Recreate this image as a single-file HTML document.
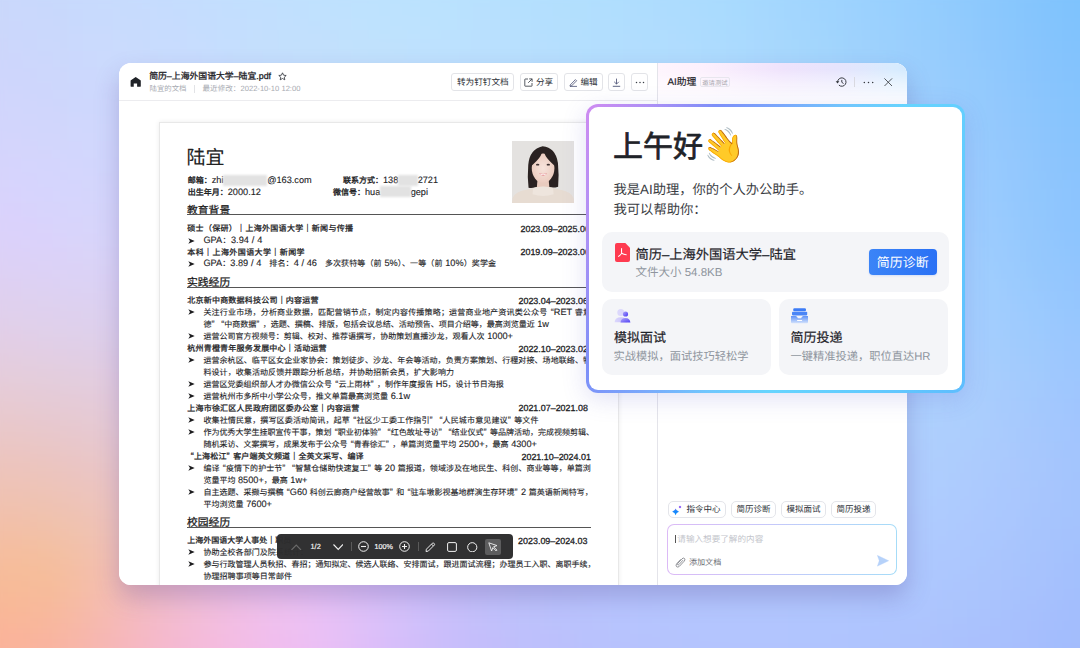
<!DOCTYPE html>
<html lang="zh-CN"><head><meta charset="utf-8">
<style>
@font-face{font-family:"LB";src:local("Liberation Sans");size-adjust:115%}
@font-face{font-family:"LB";src:local("Liberation Sans Bold");font-weight:bold;size-adjust:115%}
.doc .t{font-family:"LB","Liberation Sans",sans-serif;-webkit-text-stroke:0.12px #1d1d1f}
*{box-sizing:border-box;margin:0;padding:0}
html,body{width:1080px;height:648px;overflow:hidden;font-family:"Liberation Sans",sans-serif;color:#1f2329;text-rendering:geometricPrecision}
body{position:relative;background:#b8d0fe}
.bg{position:absolute;left:0;top:0}
.abs{position:absolute}
#win{position:absolute;left:119px;top:63px;width:788px;height:521.5px;border-radius:12px;background:#fff;overflow:hidden;box-shadow:0 12px 24px rgba(80,60,140,.27)}
#hdr{position:absolute;left:0;top:0;width:538px;height:38px;border-bottom:1px solid #ececef;background:#fff}
#docarea{position:absolute;left:0;top:38px;width:538px;bottom:0;background:#fff;overflow:hidden}
#page{position:absolute;left:40px;top:20.5px;width:459.5px;height:600px;background:#fff;box-shadow:0 0 5px rgba(0,0,0,.08);border:1px solid #e8e8e8}
.t b{font-weight:normal;-webkit-text-stroke:0.35px #1d1d1f}.t i.ql{font-style:normal;padding-left:.42em}.t i.qr{font-style:normal;padding-right:.42em}.t i.blur{display:inline-block;height:0;position:relative}.t i.blur::after{content:"";position:absolute;left:0;right:0;top:-8.5px;height:11px;background:#e2e2e2;filter:blur(1.3px)}
#ai{position:absolute;left:538px;top:0;width:250px;height:100%;border-left:1px solid #e4e4ea;background:#fff}
#pop{position:absolute;left:586px;top:104px;width:379px;height:289px;border-radius:12px;padding:3px;background:linear-gradient(116deg,#cf8bf1 0%,#ae90f5 12%,#7d8ff8 25%,#7aa8fb 38%,#70c6fd 50%,#66d4fe 62%,#62cbfe 80%,#5ebdfe 100%);box-shadow:0 6px 24px rgba(90,90,200,.18)}
#popin{width:100%;height:100%;border-radius:9px;background:#fff;position:relative}
#tb{position:absolute;left:277px;top:534px;width:235.5px;height:24.5px;border-radius:4px;background:rgba(44,44,45,.975)}

.pc{position:absolute;left:-119px;top:-63px;width:1080px;height:648px}
.t{position:absolute;white-space:nowrap;line-height:1}
.btn{position:absolute;height:18px;top:73px;border:1px solid #e3e4e8;border-radius:3px;background:#fff}
.btxt{position:absolute;top:4px;font-size:8.6px;color:#2b2f36;line-height:1;white-space:nowrap}

#ai::before{content:"";position:absolute;left:0;top:0;right:0;height:60px;background:linear-gradient(90deg,#fef4fd 0%,#fcf0fd 18%,#efe3fc 50%,#e6e4fd 72%,#d8ebfe 94%,#d4eafe 100%);-webkit-mask-image:linear-gradient(180deg,#000 0,#000 6px,rgba(0,0,0,.55) 20px,rgba(0,0,0,.1) 36px,transparent 52px)}

.card{position:absolute;background:#f4f5f8;border-radius:10px}

.chip{position:absolute;top:501.2px;height:17px;border:1px solid #e4e5ea;border-radius:5px;background:#fff}
.ctxt{position:absolute;top:505.3px;font-size:8.5px;color:#2b2f36;line-height:1;white-space:nowrap}
</style></head><body>
<svg class="bg" width="1080" height="648" viewBox="0 0 1080 648"><defs><filter id="bl" x="-10%" y="-10%" width="120%" height="120%"><feGaussianBlur stdDeviation="14"/></filter></defs><g filter="url(#bl)"><rect x="-30" y="-30" width="30" height="30" fill="#c9d7fb"/><rect x="0" y="-30" width="30" height="30" fill="#c9d8fc"/><rect x="30" y="-30" width="30" height="30" fill="#c8d9fc"/><rect x="60" y="-30" width="30" height="30" fill="#c7dafd"/><rect x="90" y="-30" width="30" height="30" fill="#c7dbfd"/><rect x="120" y="-30" width="30" height="30" fill="#c6dcfe"/><rect x="150" y="-30" width="30" height="30" fill="#c5ddfe"/><rect x="180" y="-30" width="30" height="30" fill="#c4defe"/><rect x="210" y="-30" width="30" height="30" fill="#c2dffe"/><rect x="240" y="-30" width="30" height="30" fill="#c1e0fe"/><rect x="270" y="-30" width="30" height="30" fill="#c0e0fe"/><rect x="300" y="-30" width="30" height="30" fill="#bfe1fe"/><rect x="330" y="-30" width="30" height="30" fill="#bee1fe"/><rect x="360" y="-30" width="30" height="30" fill="#bde2fe"/><rect x="390" y="-30" width="30" height="30" fill="#bbe2fe"/><rect x="420" y="-30" width="30" height="30" fill="#b9e2fe"/><rect x="450" y="-30" width="30" height="30" fill="#b8e1fe"/><rect x="480" y="-30" width="30" height="30" fill="#b6e1fe"/><rect x="510" y="-30" width="30" height="30" fill="#b4e0fe"/><rect x="540" y="-30" width="30" height="30" fill="#b2dffe"/><rect x="570" y="-30" width="30" height="30" fill="#b1dffe"/><rect x="600" y="-30" width="30" height="30" fill="#afdefe"/><rect x="630" y="-30" width="30" height="30" fill="#aeddfe"/><rect x="660" y="-30" width="30" height="30" fill="#acdcfe"/><rect x="690" y="-30" width="30" height="30" fill="#aadbfe"/><rect x="720" y="-30" width="30" height="30" fill="#a7dafe"/><rect x="750" y="-30" width="30" height="30" fill="#a4d8fe"/><rect x="780" y="-30" width="30" height="30" fill="#a2d6fe"/><rect x="810" y="-30" width="30" height="30" fill="#9fd4fe"/><rect x="840" y="-30" width="30" height="30" fill="#9bd2fe"/><rect x="870" y="-30" width="30" height="30" fill="#98d0fe"/><rect x="900" y="-30" width="30" height="30" fill="#95cefe"/><rect x="930" y="-30" width="30" height="30" fill="#91cbfe"/><rect x="960" y="-30" width="30" height="30" fill="#8dc9fd"/><rect x="990" y="-30" width="30" height="30" fill="#88c7fd"/><rect x="1020" y="-30" width="30" height="30" fill="#83c5fd"/><rect x="1050" y="-30" width="30" height="30" fill="#7fc3fd"/><rect x="1080" y="-30" width="30" height="30" fill="#7dc2fe"/><rect x="1110" y="-30" width="30" height="30" fill="#7dc2fe"/><rect x="-30" y="0" width="30" height="30" fill="#cad7fb"/><rect x="0" y="0" width="30" height="30" fill="#cad8fc"/><rect x="30" y="0" width="30" height="30" fill="#c9d8fc"/><rect x="60" y="0" width="30" height="30" fill="#c8d9fd"/><rect x="90" y="0" width="30" height="30" fill="#c8dafd"/><rect x="120" y="0" width="30" height="30" fill="#c7dbfd"/><rect x="150" y="0" width="30" height="30" fill="#c6dcfe"/><rect x="180" y="0" width="30" height="30" fill="#c5ddfe"/><rect x="210" y="0" width="30" height="30" fill="#c3defe"/><rect x="240" y="0" width="30" height="30" fill="#c2dffe"/><rect x="270" y="0" width="30" height="30" fill="#c1e0fe"/><rect x="300" y="0" width="30" height="30" fill="#c0e1fe"/><rect x="330" y="0" width="30" height="30" fill="#bfe1fe"/><rect x="360" y="0" width="30" height="30" fill="#bee2fe"/><rect x="390" y="0" width="30" height="30" fill="#bce2fe"/><rect x="420" y="0" width="30" height="30" fill="#bbe2fe"/><rect x="450" y="0" width="30" height="30" fill="#b9e1fe"/><rect x="480" y="0" width="30" height="30" fill="#b7e0fe"/><rect x="510" y="0" width="30" height="30" fill="#b5e0fe"/><rect x="540" y="0" width="30" height="30" fill="#b3dffd"/><rect x="570" y="0" width="30" height="30" fill="#b2dffd"/><rect x="600" y="0" width="30" height="30" fill="#b0defe"/><rect x="630" y="0" width="30" height="30" fill="#afddfe"/><rect x="660" y="0" width="30" height="30" fill="#addcfe"/><rect x="690" y="0" width="30" height="30" fill="#abdbfe"/><rect x="720" y="0" width="30" height="30" fill="#a8dafe"/><rect x="750" y="0" width="30" height="30" fill="#a6d8fe"/><rect x="780" y="0" width="30" height="30" fill="#a3d6fe"/><rect x="810" y="0" width="30" height="30" fill="#a0d4fe"/><rect x="840" y="0" width="30" height="30" fill="#9dd2fe"/><rect x="870" y="0" width="30" height="30" fill="#99d0fe"/><rect x="900" y="0" width="30" height="30" fill="#96cefe"/><rect x="930" y="0" width="30" height="30" fill="#92ccfd"/><rect x="960" y="0" width="30" height="30" fill="#8ec9fd"/><rect x="990" y="0" width="30" height="30" fill="#89c7fd"/><rect x="1020" y="0" width="30" height="30" fill="#85c5fd"/><rect x="1050" y="0" width="30" height="30" fill="#80c3fd"/><rect x="1080" y="0" width="30" height="30" fill="#7ec2fd"/><rect x="1110" y="0" width="30" height="30" fill="#7ec2fd"/><rect x="-30" y="30" width="30" height="30" fill="#cdd6fb"/><rect x="0" y="30" width="30" height="30" fill="#ccd7fc"/><rect x="30" y="30" width="30" height="30" fill="#cbd8fc"/><rect x="60" y="30" width="30" height="30" fill="#cad9fd"/><rect x="90" y="30" width="30" height="30" fill="#cadafd"/><rect x="120" y="30" width="30" height="30" fill="#c9dbfd"/><rect x="150" y="30" width="30" height="30" fill="#c8dcfe"/><rect x="180" y="30" width="30" height="30" fill="#c7ddfe"/><rect x="210" y="30" width="30" height="30" fill="#c5defe"/><rect x="240" y="30" width="30" height="30" fill="#c4dffd"/><rect x="270" y="30" width="30" height="30" fill="#c3e0fd"/><rect x="300" y="30" width="30" height="30" fill="#c2e0fd"/><rect x="330" y="30" width="30" height="30" fill="#c1e1fd"/><rect x="360" y="30" width="30" height="30" fill="#c0e1fd"/><rect x="390" y="30" width="30" height="30" fill="#bfe1fd"/><rect x="420" y="30" width="30" height="30" fill="#bde1fe"/><rect x="450" y="30" width="30" height="30" fill="#bbe1fe"/><rect x="480" y="30" width="30" height="30" fill="#b9e0fe"/><rect x="510" y="30" width="30" height="30" fill="#b7e0fe"/><rect x="540" y="30" width="30" height="30" fill="#b6dffe"/><rect x="570" y="30" width="30" height="30" fill="#b4dffe"/><rect x="600" y="30" width="30" height="30" fill="#b3defe"/><rect x="630" y="30" width="30" height="30" fill="#b1ddfe"/><rect x="660" y="30" width="30" height="30" fill="#b0ddfe"/><rect x="690" y="30" width="30" height="30" fill="#addbfe"/><rect x="720" y="30" width="30" height="30" fill="#abdafe"/><rect x="750" y="30" width="30" height="30" fill="#a8d8fd"/><rect x="780" y="30" width="30" height="30" fill="#a5d7fd"/><rect x="810" y="30" width="30" height="30" fill="#a2d5fd"/><rect x="840" y="30" width="30" height="30" fill="#9fd2fd"/><rect x="870" y="30" width="30" height="30" fill="#9cd0fd"/><rect x="900" y="30" width="30" height="30" fill="#98cefd"/><rect x="930" y="30" width="30" height="30" fill="#95ccfd"/><rect x="960" y="30" width="30" height="30" fill="#91c9fd"/><rect x="990" y="30" width="30" height="30" fill="#8cc7fd"/><rect x="1020" y="30" width="30" height="30" fill="#87c5fd"/><rect x="1050" y="30" width="30" height="30" fill="#83c3fd"/><rect x="1080" y="30" width="30" height="30" fill="#80c2fd"/><rect x="1110" y="30" width="30" height="30" fill="#80c2fd"/><rect x="-30" y="60" width="30" height="30" fill="#cfd6fc"/><rect x="0" y="60" width="30" height="30" fill="#ced6fc"/><rect x="30" y="60" width="30" height="30" fill="#cdd7fc"/><rect x="60" y="60" width="30" height="30" fill="#ccd8fd"/><rect x="90" y="60" width="30" height="30" fill="#ccd9fd"/><rect x="120" y="60" width="30" height="30" fill="#cbdafd"/><rect x="150" y="60" width="30" height="30" fill="#cadbfd"/><rect x="180" y="60" width="30" height="30" fill="#c9dcfd"/><rect x="210" y="60" width="30" height="30" fill="#c7ddfd"/><rect x="240" y="60" width="30" height="30" fill="#c6defd"/><rect x="270" y="60" width="30" height="30" fill="#c5dffd"/><rect x="300" y="60" width="30" height="30" fill="#c4e0fd"/><rect x="330" y="60" width="30" height="30" fill="#c3e0fd"/><rect x="360" y="60" width="30" height="30" fill="#c2e1fd"/><rect x="390" y="60" width="30" height="30" fill="#c0e1fe"/><rect x="420" y="60" width="30" height="30" fill="#bfe1fe"/><rect x="450" y="60" width="30" height="30" fill="#bde0fe"/><rect x="480" y="60" width="30" height="30" fill="#bbe0fe"/><rect x="510" y="60" width="30" height="30" fill="#b9e0fe"/><rect x="540" y="60" width="30" height="30" fill="#b8dffe"/><rect x="570" y="60" width="30" height="30" fill="#b6dffe"/><rect x="600" y="60" width="30" height="30" fill="#b5defe"/><rect x="630" y="60" width="30" height="30" fill="#b3ddfe"/><rect x="660" y="60" width="30" height="30" fill="#b1dcfe"/><rect x="690" y="60" width="30" height="30" fill="#afdbfe"/><rect x="720" y="60" width="30" height="30" fill="#addafe"/><rect x="750" y="60" width="30" height="30" fill="#aad8fe"/><rect x="780" y="60" width="30" height="30" fill="#a7d7fe"/><rect x="810" y="60" width="30" height="30" fill="#a5d5fd"/><rect x="840" y="60" width="30" height="30" fill="#a2d3fd"/><rect x="870" y="60" width="30" height="30" fill="#9ed1fd"/><rect x="900" y="60" width="30" height="30" fill="#9bcefd"/><rect x="930" y="60" width="30" height="30" fill="#97ccfd"/><rect x="960" y="60" width="30" height="30" fill="#93cafd"/><rect x="990" y="60" width="30" height="30" fill="#8fc8fd"/><rect x="1020" y="60" width="30" height="30" fill="#8ac5fd"/><rect x="1050" y="60" width="30" height="30" fill="#85c3fd"/><rect x="1080" y="60" width="30" height="30" fill="#83c2fd"/><rect x="1110" y="60" width="30" height="30" fill="#83c2fd"/><rect x="-30" y="90" width="30" height="30" fill="#d1d5fc"/><rect x="0" y="90" width="30" height="30" fill="#d0d6fc"/><rect x="30" y="90" width="30" height="30" fill="#cfd6fc"/><rect x="60" y="90" width="30" height="30" fill="#ced7fd"/><rect x="90" y="90" width="30" height="30" fill="#ced8fd"/><rect x="120" y="90" width="30" height="30" fill="#cdd9fd"/><rect x="150" y="90" width="30" height="30" fill="#ccdafd"/><rect x="180" y="90" width="30" height="30" fill="#cbdbfd"/><rect x="210" y="90" width="30" height="30" fill="#cadcfd"/><rect x="240" y="90" width="30" height="30" fill="#c8ddfd"/><rect x="270" y="90" width="30" height="30" fill="#c7defd"/><rect x="300" y="90" width="30" height="30" fill="#c6dffd"/><rect x="330" y="90" width="30" height="30" fill="#c5e0fd"/><rect x="360" y="90" width="30" height="30" fill="#c4e0fe"/><rect x="390" y="90" width="30" height="30" fill="#c2e0fe"/><rect x="420" y="90" width="30" height="30" fill="#c1e0fe"/><rect x="450" y="90" width="30" height="30" fill="#bfe0fe"/><rect x="480" y="90" width="30" height="30" fill="#bde0fe"/><rect x="510" y="90" width="30" height="30" fill="#bbdffe"/><rect x="540" y="90" width="30" height="30" fill="#badffe"/><rect x="570" y="90" width="30" height="30" fill="#b8defe"/><rect x="600" y="90" width="30" height="30" fill="#b7defe"/><rect x="630" y="90" width="30" height="30" fill="#b5ddfe"/><rect x="660" y="90" width="30" height="30" fill="#b3dcfe"/><rect x="690" y="90" width="30" height="30" fill="#b1dbfe"/><rect x="720" y="90" width="30" height="30" fill="#afdafe"/><rect x="750" y="90" width="30" height="30" fill="#acd8fe"/><rect x="780" y="90" width="30" height="30" fill="#a9d7fe"/><rect x="810" y="90" width="30" height="30" fill="#a7d5fe"/><rect x="840" y="90" width="30" height="30" fill="#a4d3fe"/><rect x="870" y="90" width="30" height="30" fill="#a1d1fd"/><rect x="900" y="90" width="30" height="30" fill="#9dcffd"/><rect x="930" y="90" width="30" height="30" fill="#9accfd"/><rect x="960" y="90" width="30" height="30" fill="#95cafd"/><rect x="990" y="90" width="30" height="30" fill="#91c8fd"/><rect x="1020" y="90" width="30" height="30" fill="#8cc6fd"/><rect x="1050" y="90" width="30" height="30" fill="#87c4fd"/><rect x="1080" y="90" width="30" height="30" fill="#85c3fd"/><rect x="1110" y="90" width="30" height="30" fill="#85c3fd"/><rect x="-30" y="120" width="30" height="30" fill="#d3d4fc"/><rect x="0" y="120" width="30" height="30" fill="#d3d5fc"/><rect x="30" y="120" width="30" height="30" fill="#d2d6fc"/><rect x="60" y="120" width="30" height="30" fill="#d1d7fd"/><rect x="90" y="120" width="30" height="30" fill="#d0d8fd"/><rect x="120" y="120" width="30" height="30" fill="#cfd9fd"/><rect x="150" y="120" width="30" height="30" fill="#cedafd"/><rect x="180" y="120" width="30" height="30" fill="#cddbfd"/><rect x="210" y="120" width="30" height="30" fill="#ccdcfd"/><rect x="240" y="120" width="30" height="30" fill="#cadcfd"/><rect x="270" y="120" width="30" height="30" fill="#c9ddfd"/><rect x="300" y="120" width="30" height="30" fill="#c8defd"/><rect x="330" y="120" width="30" height="30" fill="#c7dffd"/><rect x="360" y="120" width="30" height="30" fill="#c5dffd"/><rect x="390" y="120" width="30" height="30" fill="#c4dffe"/><rect x="420" y="120" width="30" height="30" fill="#c2dffe"/><rect x="450" y="120" width="30" height="30" fill="#c0dffe"/><rect x="480" y="120" width="30" height="30" fill="#bfdffe"/><rect x="510" y="120" width="30" height="30" fill="#bddffe"/><rect x="540" y="120" width="30" height="30" fill="#bbdefe"/><rect x="570" y="120" width="30" height="30" fill="#badefe"/><rect x="600" y="120" width="30" height="30" fill="#b8ddfe"/><rect x="630" y="120" width="30" height="30" fill="#b6ddfe"/><rect x="660" y="120" width="30" height="30" fill="#b5dcfe"/><rect x="690" y="120" width="30" height="30" fill="#b3dbfe"/><rect x="720" y="120" width="30" height="30" fill="#b0dafe"/><rect x="750" y="120" width="30" height="30" fill="#aed8fe"/><rect x="780" y="120" width="30" height="30" fill="#abd7fe"/><rect x="810" y="120" width="30" height="30" fill="#a9d5fe"/><rect x="840" y="120" width="30" height="30" fill="#a6d3fe"/><rect x="870" y="120" width="30" height="30" fill="#a3d1fe"/><rect x="900" y="120" width="30" height="30" fill="#9fcffe"/><rect x="930" y="120" width="30" height="30" fill="#9ccdfd"/><rect x="960" y="120" width="30" height="30" fill="#98cbfd"/><rect x="990" y="120" width="30" height="30" fill="#93c8fd"/><rect x="1020" y="120" width="30" height="30" fill="#8ec6fd"/><rect x="1050" y="120" width="30" height="30" fill="#89c4fd"/><rect x="1080" y="120" width="30" height="30" fill="#87c3fd"/><rect x="1110" y="120" width="30" height="30" fill="#87c3fd"/><rect x="-30" y="150" width="30" height="30" fill="#d6d4fc"/><rect x="0" y="150" width="30" height="30" fill="#d5d4fd"/><rect x="30" y="150" width="30" height="30" fill="#d4d5fd"/><rect x="60" y="150" width="30" height="30" fill="#d3d6fd"/><rect x="90" y="150" width="30" height="30" fill="#d2d7fd"/><rect x="120" y="150" width="30" height="30" fill="#d1d8fd"/><rect x="150" y="150" width="30" height="30" fill="#d0d9fd"/><rect x="180" y="150" width="30" height="30" fill="#cfdafd"/><rect x="210" y="150" width="30" height="30" fill="#cedbfd"/><rect x="240" y="150" width="30" height="30" fill="#ccdbfd"/><rect x="270" y="150" width="30" height="30" fill="#cbdcfd"/><rect x="300" y="150" width="30" height="30" fill="#caddfd"/><rect x="330" y="150" width="30" height="30" fill="#c8ddfd"/><rect x="360" y="150" width="30" height="30" fill="#c7defd"/><rect x="390" y="150" width="30" height="30" fill="#c5defe"/><rect x="420" y="150" width="30" height="30" fill="#c4defe"/><rect x="450" y="150" width="30" height="30" fill="#c2defe"/><rect x="480" y="150" width="30" height="30" fill="#c0defe"/><rect x="510" y="150" width="30" height="30" fill="#bedefe"/><rect x="540" y="150" width="30" height="30" fill="#bddefe"/><rect x="570" y="150" width="30" height="30" fill="#bbddfe"/><rect x="600" y="150" width="30" height="30" fill="#b9ddfe"/><rect x="630" y="150" width="30" height="30" fill="#b8dcfe"/><rect x="660" y="150" width="30" height="30" fill="#b6dcfe"/><rect x="690" y="150" width="30" height="30" fill="#b4dbfe"/><rect x="720" y="150" width="30" height="30" fill="#b2dafe"/><rect x="750" y="150" width="30" height="30" fill="#afd8fe"/><rect x="780" y="150" width="30" height="30" fill="#add7fe"/><rect x="810" y="150" width="30" height="30" fill="#aad5fe"/><rect x="840" y="150" width="30" height="30" fill="#a7d4fe"/><rect x="870" y="150" width="30" height="30" fill="#a4d2fe"/><rect x="900" y="150" width="30" height="30" fill="#a1d0fe"/><rect x="930" y="150" width="30" height="30" fill="#9dcdfe"/><rect x="960" y="150" width="30" height="30" fill="#9acbfe"/><rect x="990" y="150" width="30" height="30" fill="#95c9fe"/><rect x="1020" y="150" width="30" height="30" fill="#90c6fd"/><rect x="1050" y="150" width="30" height="30" fill="#8bc4fd"/><rect x="1080" y="150" width="30" height="30" fill="#89c3fe"/><rect x="1110" y="150" width="30" height="30" fill="#89c3fe"/><rect x="-30" y="180" width="30" height="30" fill="#d8d3fc"/><rect x="0" y="180" width="30" height="30" fill="#d8d3fd"/><rect x="30" y="180" width="30" height="30" fill="#d6d4fd"/><rect x="60" y="180" width="30" height="30" fill="#d5d5fd"/><rect x="90" y="180" width="30" height="30" fill="#d4d6fc"/><rect x="120" y="180" width="30" height="30" fill="#d3d7fc"/><rect x="150" y="180" width="30" height="30" fill="#d2d8fc"/><rect x="180" y="180" width="30" height="30" fill="#d1d9fc"/><rect x="210" y="180" width="30" height="30" fill="#d0d9fc"/><rect x="240" y="180" width="30" height="30" fill="#cedafc"/><rect x="270" y="180" width="30" height="30" fill="#cddbfc"/><rect x="300" y="180" width="30" height="30" fill="#ccdcfd"/><rect x="330" y="180" width="30" height="30" fill="#cadcfd"/><rect x="360" y="180" width="30" height="30" fill="#c9ddfd"/><rect x="390" y="180" width="30" height="30" fill="#c7ddfe"/><rect x="420" y="180" width="30" height="30" fill="#c5ddfe"/><rect x="450" y="180" width="30" height="30" fill="#c3ddfe"/><rect x="480" y="180" width="30" height="30" fill="#c1ddfe"/><rect x="510" y="180" width="30" height="30" fill="#c0ddfe"/><rect x="540" y="180" width="30" height="30" fill="#beddfe"/><rect x="570" y="180" width="30" height="30" fill="#bcddfe"/><rect x="600" y="180" width="30" height="30" fill="#badcfe"/><rect x="630" y="180" width="30" height="30" fill="#b9dcfe"/><rect x="660" y="180" width="30" height="30" fill="#b7dbfe"/><rect x="690" y="180" width="30" height="30" fill="#b5dafe"/><rect x="720" y="180" width="30" height="30" fill="#b3d9fe"/><rect x="750" y="180" width="30" height="30" fill="#b1d8fe"/><rect x="780" y="180" width="30" height="30" fill="#aed7fe"/><rect x="810" y="180" width="30" height="30" fill="#acd5fe"/><rect x="840" y="180" width="30" height="30" fill="#a9d4fe"/><rect x="870" y="180" width="30" height="30" fill="#a6d2fe"/><rect x="900" y="180" width="30" height="30" fill="#a3d0fe"/><rect x="930" y="180" width="30" height="30" fill="#9fcefe"/><rect x="960" y="180" width="30" height="30" fill="#9bccfe"/><rect x="990" y="180" width="30" height="30" fill="#96c9fe"/><rect x="1020" y="180" width="30" height="30" fill="#91c7fd"/><rect x="1050" y="180" width="30" height="30" fill="#8dc5fe"/><rect x="1080" y="180" width="30" height="30" fill="#8ac3fe"/><rect x="1110" y="180" width="30" height="30" fill="#8ac3fe"/><rect x="-30" y="210" width="30" height="30" fill="#dbd2fb"/><rect x="0" y="210" width="30" height="30" fill="#dad2fc"/><rect x="30" y="210" width="30" height="30" fill="#d9d3fc"/><rect x="60" y="210" width="30" height="30" fill="#d8d4fc"/><rect x="90" y="210" width="30" height="30" fill="#d7d5fb"/><rect x="120" y="210" width="30" height="30" fill="#d5d6fb"/><rect x="150" y="210" width="30" height="30" fill="#d4d6fa"/><rect x="180" y="210" width="30" height="30" fill="#d3d7fa"/><rect x="210" y="210" width="30" height="30" fill="#d2d8fb"/><rect x="240" y="210" width="30" height="30" fill="#d0d9fb"/><rect x="270" y="210" width="30" height="30" fill="#cfdafc"/><rect x="300" y="210" width="30" height="30" fill="#cddafc"/><rect x="330" y="210" width="30" height="30" fill="#ccdbfd"/><rect x="360" y="210" width="30" height="30" fill="#cadbfd"/><rect x="390" y="210" width="30" height="30" fill="#c8dcfd"/><rect x="420" y="210" width="30" height="30" fill="#c6dcfe"/><rect x="450" y="210" width="30" height="30" fill="#c4dcfe"/><rect x="480" y="210" width="30" height="30" fill="#c2dcfe"/><rect x="510" y="210" width="30" height="30" fill="#c1dcfe"/><rect x="540" y="210" width="30" height="30" fill="#bfdcfe"/><rect x="570" y="210" width="30" height="30" fill="#bddcff"/><rect x="600" y="210" width="30" height="30" fill="#bbdbff"/><rect x="630" y="210" width="30" height="30" fill="#b9dbfe"/><rect x="660" y="210" width="30" height="30" fill="#b8dafe"/><rect x="690" y="210" width="30" height="30" fill="#b6dafe"/><rect x="720" y="210" width="30" height="30" fill="#b4d9fe"/><rect x="750" y="210" width="30" height="30" fill="#b2d8fe"/><rect x="780" y="210" width="30" height="30" fill="#b0d7fe"/><rect x="810" y="210" width="30" height="30" fill="#add6fe"/><rect x="840" y="210" width="30" height="30" fill="#abd4fe"/><rect x="870" y="210" width="30" height="30" fill="#a8d2fe"/><rect x="900" y="210" width="30" height="30" fill="#a4d1fe"/><rect x="930" y="210" width="30" height="30" fill="#a1cffe"/><rect x="960" y="210" width="30" height="30" fill="#9dccfe"/><rect x="990" y="210" width="30" height="30" fill="#98cafe"/><rect x="1020" y="210" width="30" height="30" fill="#93c7fd"/><rect x="1050" y="210" width="30" height="30" fill="#8ec5fe"/><rect x="1080" y="210" width="30" height="30" fill="#8cc4fe"/><rect x="1110" y="210" width="30" height="30" fill="#8cc4fe"/><rect x="-30" y="240" width="30" height="30" fill="#ddd1f7"/><rect x="0" y="240" width="30" height="30" fill="#dcd1f8"/><rect x="30" y="240" width="30" height="30" fill="#dbd2f9"/><rect x="60" y="240" width="30" height="30" fill="#dad3f8"/><rect x="90" y="240" width="30" height="30" fill="#d9d4f8"/><rect x="120" y="240" width="30" height="30" fill="#d8d4f8"/><rect x="150" y="240" width="30" height="30" fill="#d7d5f8"/><rect x="180" y="240" width="30" height="30" fill="#d5d6f8"/><rect x="210" y="240" width="30" height="30" fill="#d4d7f9"/><rect x="240" y="240" width="30" height="30" fill="#d2d8fa"/><rect x="270" y="240" width="30" height="30" fill="#d1d8fa"/><rect x="300" y="240" width="30" height="30" fill="#cfd9fb"/><rect x="330" y="240" width="30" height="30" fill="#cdd9fc"/><rect x="360" y="240" width="30" height="30" fill="#cbdafd"/><rect x="390" y="240" width="30" height="30" fill="#c9dafd"/><rect x="420" y="240" width="30" height="30" fill="#c7dbfe"/><rect x="450" y="240" width="30" height="30" fill="#c5dbfe"/><rect x="480" y="240" width="30" height="30" fill="#c3dbfe"/><rect x="510" y="240" width="30" height="30" fill="#c1dbff"/><rect x="540" y="240" width="30" height="30" fill="#bfdbff"/><rect x="570" y="240" width="30" height="30" fill="#bddbff"/><rect x="600" y="240" width="30" height="30" fill="#bcdaff"/><rect x="630" y="240" width="30" height="30" fill="#badaff"/><rect x="660" y="240" width="30" height="30" fill="#b8daff"/><rect x="690" y="240" width="30" height="30" fill="#b6d9fe"/><rect x="720" y="240" width="30" height="30" fill="#b5d9fe"/><rect x="750" y="240" width="30" height="30" fill="#b3d8fe"/><rect x="780" y="240" width="30" height="30" fill="#b1d7fe"/><rect x="810" y="240" width="30" height="30" fill="#aed6fe"/><rect x="840" y="240" width="30" height="30" fill="#acd4fe"/><rect x="870" y="240" width="30" height="30" fill="#a9d3fe"/><rect x="900" y="240" width="30" height="30" fill="#a6d1fe"/><rect x="930" y="240" width="30" height="30" fill="#a3cffe"/><rect x="960" y="240" width="30" height="30" fill="#9fcdfe"/><rect x="990" y="240" width="30" height="30" fill="#9acbfe"/><rect x="1020" y="240" width="30" height="30" fill="#95c8fd"/><rect x="1050" y="240" width="30" height="30" fill="#90c6fe"/><rect x="1080" y="240" width="30" height="30" fill="#8ec4fe"/><rect x="1110" y="240" width="30" height="30" fill="#8ec4fe"/><rect x="-30" y="270" width="30" height="30" fill="#dfd0f1"/><rect x="0" y="270" width="30" height="30" fill="#ded0f2"/><rect x="30" y="270" width="30" height="30" fill="#ddd1f3"/><rect x="60" y="270" width="30" height="30" fill="#dcd2f4"/><rect x="90" y="270" width="30" height="30" fill="#dbd2f4"/><rect x="120" y="270" width="30" height="30" fill="#dad3f4"/><rect x="150" y="270" width="30" height="30" fill="#d9d4f5"/><rect x="180" y="270" width="30" height="30" fill="#d7d5f6"/><rect x="210" y="270" width="30" height="30" fill="#d6d5f7"/><rect x="240" y="270" width="30" height="30" fill="#d5d6f8"/><rect x="270" y="270" width="30" height="30" fill="#d3d7f9"/><rect x="300" y="270" width="30" height="30" fill="#d1d7fa"/><rect x="330" y="270" width="30" height="30" fill="#cfd8fb"/><rect x="360" y="270" width="30" height="30" fill="#cdd8fc"/><rect x="390" y="270" width="30" height="30" fill="#cbd9fd"/><rect x="420" y="270" width="30" height="30" fill="#c8d9fe"/><rect x="450" y="270" width="30" height="30" fill="#c6d9fe"/><rect x="480" y="270" width="30" height="30" fill="#c4d9fe"/><rect x="510" y="270" width="30" height="30" fill="#c2daff"/><rect x="540" y="270" width="30" height="30" fill="#c0daff"/><rect x="570" y="270" width="30" height="30" fill="#bed9ff"/><rect x="600" y="270" width="30" height="30" fill="#bcd9ff"/><rect x="630" y="270" width="30" height="30" fill="#bad9ff"/><rect x="660" y="270" width="30" height="30" fill="#b9d9ff"/><rect x="690" y="270" width="30" height="30" fill="#b7d8ff"/><rect x="720" y="270" width="30" height="30" fill="#b5d8fe"/><rect x="750" y="270" width="30" height="30" fill="#b3d7fe"/><rect x="780" y="270" width="30" height="30" fill="#b2d6fe"/><rect x="810" y="270" width="30" height="30" fill="#b0d5fe"/><rect x="840" y="270" width="30" height="30" fill="#add4fe"/><rect x="870" y="270" width="30" height="30" fill="#abd3fe"/><rect x="900" y="270" width="30" height="30" fill="#a8d1fe"/><rect x="930" y="270" width="30" height="30" fill="#a5d0fe"/><rect x="960" y="270" width="30" height="30" fill="#a1cefe"/><rect x="990" y="270" width="30" height="30" fill="#9dccfe"/><rect x="1020" y="270" width="30" height="30" fill="#98c9fd"/><rect x="1050" y="270" width="30" height="30" fill="#94c6fe"/><rect x="1080" y="270" width="30" height="30" fill="#92c5fe"/><rect x="1110" y="270" width="30" height="30" fill="#92c5fe"/><rect x="-30" y="300" width="30" height="30" fill="#e1cfeb"/><rect x="0" y="300" width="30" height="30" fill="#e0d0ec"/><rect x="30" y="300" width="30" height="30" fill="#dfd0ed"/><rect x="60" y="300" width="30" height="30" fill="#ded0ee"/><rect x="90" y="300" width="30" height="30" fill="#ddd1ef"/><rect x="120" y="300" width="30" height="30" fill="#dcd2f0"/><rect x="150" y="300" width="30" height="30" fill="#dbd2f1"/><rect x="180" y="300" width="30" height="30" fill="#dad3f2"/><rect x="210" y="300" width="30" height="30" fill="#d8d4f4"/><rect x="240" y="300" width="30" height="30" fill="#d7d4f6"/><rect x="270" y="300" width="30" height="30" fill="#d5d5f7"/><rect x="300" y="300" width="30" height="30" fill="#d3d6f9"/><rect x="330" y="300" width="30" height="30" fill="#d1d6fa"/><rect x="360" y="300" width="30" height="30" fill="#ced7fb"/><rect x="390" y="300" width="30" height="30" fill="#ccd7fc"/><rect x="420" y="300" width="30" height="30" fill="#c9d7fd"/><rect x="450" y="300" width="30" height="30" fill="#c7d8fe"/><rect x="480" y="300" width="30" height="30" fill="#c4d8fe"/><rect x="510" y="300" width="30" height="30" fill="#c2d8ff"/><rect x="540" y="300" width="30" height="30" fill="#c0d8ff"/><rect x="570" y="300" width="30" height="30" fill="#bed8ff"/><rect x="600" y="300" width="30" height="30" fill="#bcd8ff"/><rect x="630" y="300" width="30" height="30" fill="#bbd8ff"/><rect x="660" y="300" width="30" height="30" fill="#b9d8ff"/><rect x="690" y="300" width="30" height="30" fill="#b7d8ff"/><rect x="720" y="300" width="30" height="30" fill="#b6d7ff"/><rect x="750" y="300" width="30" height="30" fill="#b4d7fe"/><rect x="780" y="300" width="30" height="30" fill="#b2d6fe"/><rect x="810" y="300" width="30" height="30" fill="#b1d5fe"/><rect x="840" y="300" width="30" height="30" fill="#afd4fe"/><rect x="870" y="300" width="30" height="30" fill="#acd3fe"/><rect x="900" y="300" width="30" height="30" fill="#aad2fe"/><rect x="930" y="300" width="30" height="30" fill="#a7d0fe"/><rect x="960" y="300" width="30" height="30" fill="#a3cefe"/><rect x="990" y="300" width="30" height="30" fill="#a0ccfe"/><rect x="1020" y="300" width="30" height="30" fill="#9bcafe"/><rect x="1050" y="300" width="30" height="30" fill="#97c7fe"/><rect x="1080" y="300" width="30" height="30" fill="#95c6fe"/><rect x="1110" y="300" width="30" height="30" fill="#95c6fe"/><rect x="-30" y="330" width="30" height="30" fill="#e3cee3"/><rect x="0" y="330" width="30" height="30" fill="#e2cee4"/><rect x="30" y="330" width="30" height="30" fill="#e1cfe6"/><rect x="60" y="330" width="30" height="30" fill="#e0cfe7"/><rect x="90" y="330" width="30" height="30" fill="#dfcfe8"/><rect x="120" y="330" width="30" height="30" fill="#ded0ea"/><rect x="150" y="330" width="30" height="30" fill="#ddd1ec"/><rect x="180" y="330" width="30" height="30" fill="#dcd1ee"/><rect x="210" y="330" width="30" height="30" fill="#dad2f1"/><rect x="240" y="330" width="30" height="30" fill="#d9d3f3"/><rect x="270" y="330" width="30" height="30" fill="#d7d3f5"/><rect x="300" y="330" width="30" height="30" fill="#d5d4f8"/><rect x="330" y="330" width="30" height="30" fill="#d2d4f9"/><rect x="360" y="330" width="30" height="30" fill="#cfd5fb"/><rect x="390" y="330" width="30" height="30" fill="#cdd5fc"/><rect x="420" y="330" width="30" height="30" fill="#cad6fd"/><rect x="450" y="330" width="30" height="30" fill="#c7d6fe"/><rect x="480" y="330" width="30" height="30" fill="#c5d6fe"/><rect x="510" y="330" width="30" height="30" fill="#c2d6ff"/><rect x="540" y="330" width="30" height="30" fill="#c0d7ff"/><rect x="570" y="330" width="30" height="30" fill="#bed7ff"/><rect x="600" y="330" width="30" height="30" fill="#bcd7ff"/><rect x="630" y="330" width="30" height="30" fill="#bbd7ff"/><rect x="660" y="330" width="30" height="30" fill="#b9d7ff"/><rect x="690" y="330" width="30" height="30" fill="#b7d7ff"/><rect x="720" y="330" width="30" height="30" fill="#b6d6ff"/><rect x="750" y="330" width="30" height="30" fill="#b5d6ff"/><rect x="780" y="330" width="30" height="30" fill="#b3d5fe"/><rect x="810" y="330" width="30" height="30" fill="#b1d5fe"/><rect x="840" y="330" width="30" height="30" fill="#b0d4fe"/><rect x="870" y="330" width="30" height="30" fill="#aed3fe"/><rect x="900" y="330" width="30" height="30" fill="#abd2fe"/><rect x="930" y="330" width="30" height="30" fill="#a9d0fe"/><rect x="960" y="330" width="30" height="30" fill="#a6cefe"/><rect x="990" y="330" width="30" height="30" fill="#a2ccfd"/><rect x="1020" y="330" width="30" height="30" fill="#9fcafd"/><rect x="1050" y="330" width="30" height="30" fill="#9bc7fe"/><rect x="1080" y="330" width="30" height="30" fill="#99c6fe"/><rect x="1110" y="330" width="30" height="30" fill="#99c6fe"/><rect x="-30" y="360" width="30" height="30" fill="#e5ccdb"/><rect x="0" y="360" width="30" height="30" fill="#e4cddc"/><rect x="30" y="360" width="30" height="30" fill="#e3cddd"/><rect x="60" y="360" width="30" height="30" fill="#e2cddf"/><rect x="90" y="360" width="30" height="30" fill="#e2cde1"/><rect x="120" y="360" width="30" height="30" fill="#e1cee4"/><rect x="150" y="360" width="30" height="30" fill="#e0cfe7"/><rect x="180" y="360" width="30" height="30" fill="#decfea"/><rect x="210" y="360" width="30" height="30" fill="#ddd0ed"/><rect x="240" y="360" width="30" height="30" fill="#dbd1f1"/><rect x="270" y="360" width="30" height="30" fill="#d9d1f4"/><rect x="300" y="360" width="30" height="30" fill="#d6d2f6"/><rect x="330" y="360" width="30" height="30" fill="#d4d3f8"/><rect x="360" y="360" width="30" height="30" fill="#d1d3fa"/><rect x="390" y="360" width="30" height="30" fill="#ced3fc"/><rect x="420" y="360" width="30" height="30" fill="#cbd4fd"/><rect x="450" y="360" width="30" height="30" fill="#c8d4fe"/><rect x="480" y="360" width="30" height="30" fill="#c5d4fe"/><rect x="510" y="360" width="30" height="30" fill="#c2d5ff"/><rect x="540" y="360" width="30" height="30" fill="#c0d5ff"/><rect x="570" y="360" width="30" height="30" fill="#bed5ff"/><rect x="600" y="360" width="30" height="30" fill="#bcd5ff"/><rect x="630" y="360" width="30" height="30" fill="#bad5ff"/><rect x="660" y="360" width="30" height="30" fill="#b9d5ff"/><rect x="690" y="360" width="30" height="30" fill="#b7d5ff"/><rect x="720" y="360" width="30" height="30" fill="#b6d5ff"/><rect x="750" y="360" width="30" height="30" fill="#b5d5ff"/><rect x="780" y="360" width="30" height="30" fill="#b3d5fe"/><rect x="810" y="360" width="30" height="30" fill="#b2d4fe"/><rect x="840" y="360" width="30" height="30" fill="#b1d3fe"/><rect x="870" y="360" width="30" height="30" fill="#afd2fe"/><rect x="900" y="360" width="30" height="30" fill="#add1fe"/><rect x="930" y="360" width="30" height="30" fill="#abd0fe"/><rect x="960" y="360" width="30" height="30" fill="#a8cefd"/><rect x="990" y="360" width="30" height="30" fill="#a5ccfd"/><rect x="1020" y="360" width="30" height="30" fill="#a2cafd"/><rect x="1050" y="360" width="30" height="30" fill="#9ec7fe"/><rect x="1080" y="360" width="30" height="30" fill="#9cc6fe"/><rect x="1110" y="360" width="30" height="30" fill="#9cc6fe"/><rect x="-30" y="390" width="30" height="30" fill="#e7cad1"/><rect x="0" y="390" width="30" height="30" fill="#e7cad2"/><rect x="30" y="390" width="30" height="30" fill="#e5cad4"/><rect x="60" y="390" width="30" height="30" fill="#e5cbd6"/><rect x="90" y="390" width="30" height="30" fill="#e4cbd9"/><rect x="120" y="390" width="30" height="30" fill="#e3ccdd"/><rect x="150" y="390" width="30" height="30" fill="#e2cde1"/><rect x="180" y="390" width="30" height="30" fill="#e1cde5"/><rect x="210" y="390" width="30" height="30" fill="#dfceea"/><rect x="240" y="390" width="30" height="30" fill="#ddcfee"/><rect x="270" y="390" width="30" height="30" fill="#dbd0f2"/><rect x="300" y="390" width="30" height="30" fill="#d8d0f5"/><rect x="330" y="390" width="30" height="30" fill="#d5d1f8"/><rect x="360" y="390" width="30" height="30" fill="#d2d1fa"/><rect x="390" y="390" width="30" height="30" fill="#cfd1fb"/><rect x="420" y="390" width="30" height="30" fill="#cbd2fd"/><rect x="450" y="390" width="30" height="30" fill="#c8d2fe"/><rect x="480" y="390" width="30" height="30" fill="#c5d2fe"/><rect x="510" y="390" width="30" height="30" fill="#c2d3ff"/><rect x="540" y="390" width="30" height="30" fill="#c0d3ff"/><rect x="570" y="390" width="30" height="30" fill="#bdd3ff"/><rect x="600" y="390" width="30" height="30" fill="#bcd4ff"/><rect x="630" y="390" width="30" height="30" fill="#bad4ff"/><rect x="660" y="390" width="30" height="30" fill="#b8d4ff"/><rect x="690" y="390" width="30" height="30" fill="#b7d4ff"/><rect x="720" y="390" width="30" height="30" fill="#b6d4ff"/><rect x="750" y="390" width="30" height="30" fill="#b5d4ff"/><rect x="780" y="390" width="30" height="30" fill="#b4d3fe"/><rect x="810" y="390" width="30" height="30" fill="#b3d3fe"/><rect x="840" y="390" width="30" height="30" fill="#b1d2fe"/><rect x="870" y="390" width="30" height="30" fill="#b0d2fe"/><rect x="900" y="390" width="30" height="30" fill="#aed1fe"/><rect x="930" y="390" width="30" height="30" fill="#accffd"/><rect x="960" y="390" width="30" height="30" fill="#aacefd"/><rect x="990" y="390" width="30" height="30" fill="#a7cbfd"/><rect x="1020" y="390" width="30" height="30" fill="#a4c9fd"/><rect x="1050" y="390" width="30" height="30" fill="#a1c6fe"/><rect x="1080" y="390" width="30" height="30" fill="#9fc5fe"/><rect x="1110" y="390" width="30" height="30" fill="#9fc5fe"/><rect x="-30" y="420" width="30" height="30" fill="#eac7c7"/><rect x="0" y="420" width="30" height="30" fill="#e9c7c8"/><rect x="30" y="420" width="30" height="30" fill="#e8c7ca"/><rect x="60" y="420" width="30" height="30" fill="#e7c8cd"/><rect x="90" y="420" width="30" height="30" fill="#e6c9d1"/><rect x="120" y="420" width="30" height="30" fill="#e6cad6"/><rect x="150" y="420" width="30" height="30" fill="#e5cadb"/><rect x="180" y="420" width="30" height="30" fill="#e4cbe1"/><rect x="210" y="420" width="30" height="30" fill="#e2cce6"/><rect x="240" y="420" width="30" height="30" fill="#e0cdec"/><rect x="270" y="420" width="30" height="30" fill="#ddcef0"/><rect x="300" y="420" width="30" height="30" fill="#dacef4"/><rect x="330" y="420" width="30" height="30" fill="#d7cff7"/><rect x="360" y="420" width="30" height="30" fill="#d3cff9"/><rect x="390" y="420" width="30" height="30" fill="#cfcffb"/><rect x="420" y="420" width="30" height="30" fill="#ccd0fc"/><rect x="450" y="420" width="30" height="30" fill="#c8d0fd"/><rect x="480" y="420" width="30" height="30" fill="#c5d0fe"/><rect x="510" y="420" width="30" height="30" fill="#c2d1ff"/><rect x="540" y="420" width="30" height="30" fill="#bfd1ff"/><rect x="570" y="420" width="30" height="30" fill="#bdd1ff"/><rect x="600" y="420" width="30" height="30" fill="#bbd2ff"/><rect x="630" y="420" width="30" height="30" fill="#b9d2ff"/><rect x="660" y="420" width="30" height="30" fill="#b8d2ff"/><rect x="690" y="420" width="30" height="30" fill="#b7d2ff"/><rect x="720" y="420" width="30" height="30" fill="#b6d2ff"/><rect x="750" y="420" width="30" height="30" fill="#b5d2ff"/><rect x="780" y="420" width="30" height="30" fill="#b4d2fe"/><rect x="810" y="420" width="30" height="30" fill="#b3d2fe"/><rect x="840" y="420" width="30" height="30" fill="#b2d1fe"/><rect x="870" y="420" width="30" height="30" fill="#b0d1fe"/><rect x="900" y="420" width="30" height="30" fill="#afd0fe"/><rect x="930" y="420" width="30" height="30" fill="#adcefd"/><rect x="960" y="420" width="30" height="30" fill="#abcdfd"/><rect x="990" y="420" width="30" height="30" fill="#a9cafd"/><rect x="1020" y="420" width="30" height="30" fill="#a6c8fd"/><rect x="1050" y="420" width="30" height="30" fill="#a3c6fe"/><rect x="1080" y="420" width="30" height="30" fill="#a1c4fe"/><rect x="1110" y="420" width="30" height="30" fill="#a1c4fe"/><rect x="-30" y="450" width="30" height="30" fill="#edc4bc"/><rect x="0" y="450" width="30" height="30" fill="#ecc4bd"/><rect x="30" y="450" width="30" height="30" fill="#ebc5bf"/><rect x="60" y="450" width="30" height="30" fill="#eac5c3"/><rect x="90" y="450" width="30" height="30" fill="#e9c6c8"/><rect x="120" y="450" width="30" height="30" fill="#e8c7ce"/><rect x="150" y="450" width="30" height="30" fill="#e8c8d5"/><rect x="180" y="450" width="30" height="30" fill="#e6c9dd"/><rect x="210" y="450" width="30" height="30" fill="#e5cae4"/><rect x="240" y="450" width="30" height="30" fill="#e3cbea"/><rect x="270" y="450" width="30" height="30" fill="#e0ccef"/><rect x="300" y="450" width="30" height="30" fill="#ddccf3"/><rect x="330" y="450" width="30" height="30" fill="#d9cdf6"/><rect x="360" y="450" width="30" height="30" fill="#d5cdf9"/><rect x="390" y="450" width="30" height="30" fill="#d0cdfb"/><rect x="420" y="450" width="30" height="30" fill="#cccdfc"/><rect x="450" y="450" width="30" height="30" fill="#c8cefd"/><rect x="480" y="450" width="30" height="30" fill="#c4cefe"/><rect x="510" y="450" width="30" height="30" fill="#c1cefe"/><rect x="540" y="450" width="30" height="30" fill="#becfff"/><rect x="570" y="450" width="30" height="30" fill="#bccfff"/><rect x="600" y="450" width="30" height="30" fill="#bad0ff"/><rect x="630" y="450" width="30" height="30" fill="#b9d0ff"/><rect x="660" y="450" width="30" height="30" fill="#b7d0ff"/><rect x="690" y="450" width="30" height="30" fill="#b6d1ff"/><rect x="720" y="450" width="30" height="30" fill="#b5d1ff"/><rect x="750" y="450" width="30" height="30" fill="#b4d1ff"/><rect x="780" y="450" width="30" height="30" fill="#b3d1fe"/><rect x="810" y="450" width="30" height="30" fill="#b3d0fe"/><rect x="840" y="450" width="30" height="30" fill="#b2d0fe"/><rect x="870" y="450" width="30" height="30" fill="#b1cffe"/><rect x="900" y="450" width="30" height="30" fill="#afcefe"/><rect x="930" y="450" width="30" height="30" fill="#aecdfd"/><rect x="960" y="450" width="30" height="30" fill="#accbfd"/><rect x="990" y="450" width="30" height="30" fill="#aac9fd"/><rect x="1020" y="450" width="30" height="30" fill="#a7c7fd"/><rect x="1050" y="450" width="30" height="30" fill="#a4c5fd"/><rect x="1080" y="450" width="30" height="30" fill="#a2c4fd"/><rect x="1110" y="450" width="30" height="30" fill="#a2c4fd"/><rect x="-30" y="480" width="30" height="30" fill="#f0c2b2"/><rect x="0" y="480" width="30" height="30" fill="#efc2b3"/><rect x="30" y="480" width="30" height="30" fill="#eec3b5"/><rect x="60" y="480" width="30" height="30" fill="#edc3b9"/><rect x="90" y="480" width="30" height="30" fill="#ecc4bf"/><rect x="120" y="480" width="30" height="30" fill="#ebc5c8"/><rect x="150" y="480" width="30" height="30" fill="#eac6d0"/><rect x="180" y="480" width="30" height="30" fill="#e9c7d9"/><rect x="210" y="480" width="30" height="30" fill="#e8c8e1"/><rect x="240" y="480" width="30" height="30" fill="#e6c9e8"/><rect x="270" y="480" width="30" height="30" fill="#e3c9ee"/><rect x="300" y="480" width="30" height="30" fill="#dfcaf3"/><rect x="330" y="480" width="30" height="30" fill="#dbcaf6"/><rect x="360" y="480" width="30" height="30" fill="#d6cbf9"/><rect x="390" y="480" width="30" height="30" fill="#d1cbfb"/><rect x="420" y="480" width="30" height="30" fill="#cccbfc"/><rect x="450" y="480" width="30" height="30" fill="#c8cbfd"/><rect x="480" y="480" width="30" height="30" fill="#c4ccfe"/><rect x="510" y="480" width="30" height="30" fill="#c0ccfe"/><rect x="540" y="480" width="30" height="30" fill="#beccff"/><rect x="570" y="480" width="30" height="30" fill="#bbcdff"/><rect x="600" y="480" width="30" height="30" fill="#b9ceff"/><rect x="630" y="480" width="30" height="30" fill="#b8ceff"/><rect x="660" y="480" width="30" height="30" fill="#b7ceff"/><rect x="690" y="480" width="30" height="30" fill="#b6cfff"/><rect x="720" y="480" width="30" height="30" fill="#b5cfff"/><rect x="750" y="480" width="30" height="30" fill="#b4cfff"/><rect x="780" y="480" width="30" height="30" fill="#b3cffe"/><rect x="810" y="480" width="30" height="30" fill="#b2cffe"/><rect x="840" y="480" width="30" height="30" fill="#b1cefe"/><rect x="870" y="480" width="30" height="30" fill="#b1cefe"/><rect x="900" y="480" width="30" height="30" fill="#afcdfe"/><rect x="930" y="480" width="30" height="30" fill="#aeccfe"/><rect x="960" y="480" width="30" height="30" fill="#accafe"/><rect x="990" y="480" width="30" height="30" fill="#aac8fe"/><rect x="1020" y="480" width="30" height="30" fill="#a8c6fd"/><rect x="1050" y="480" width="30" height="30" fill="#a5c4fd"/><rect x="1080" y="480" width="30" height="30" fill="#a3c3fd"/><rect x="1110" y="480" width="30" height="30" fill="#a3c3fd"/><rect x="-30" y="510" width="30" height="30" fill="#f3bfa8"/><rect x="0" y="510" width="30" height="30" fill="#f2c0a8"/><rect x="30" y="510" width="30" height="30" fill="#f1c1aa"/><rect x="60" y="510" width="30" height="30" fill="#f0c2af"/><rect x="90" y="510" width="30" height="30" fill="#efc2b7"/><rect x="120" y="510" width="30" height="30" fill="#eec3c2"/><rect x="150" y="510" width="30" height="30" fill="#edc4cd"/><rect x="180" y="510" width="30" height="30" fill="#ecc5d7"/><rect x="210" y="510" width="30" height="30" fill="#ebc6e0"/><rect x="240" y="510" width="30" height="30" fill="#e9c7e8"/><rect x="270" y="510" width="30" height="30" fill="#e6c7ee"/><rect x="300" y="510" width="30" height="30" fill="#e2c8f3"/><rect x="330" y="510" width="30" height="30" fill="#ddc8f6"/><rect x="360" y="510" width="30" height="30" fill="#d7c8f9"/><rect x="390" y="510" width="30" height="30" fill="#d2c8fb"/><rect x="420" y="510" width="30" height="30" fill="#ccc8fc"/><rect x="450" y="510" width="30" height="30" fill="#c7c9fd"/><rect x="480" y="510" width="30" height="30" fill="#c3c9fd"/><rect x="510" y="510" width="30" height="30" fill="#c0c9fe"/><rect x="540" y="510" width="30" height="30" fill="#bdcafe"/><rect x="570" y="510" width="30" height="30" fill="#bacbff"/><rect x="600" y="510" width="30" height="30" fill="#b9cbff"/><rect x="630" y="510" width="30" height="30" fill="#b7ccff"/><rect x="660" y="510" width="30" height="30" fill="#b6ccff"/><rect x="690" y="510" width="30" height="30" fill="#b5cdff"/><rect x="720" y="510" width="30" height="30" fill="#b4cdff"/><rect x="750" y="510" width="30" height="30" fill="#b3cdff"/><rect x="780" y="510" width="30" height="30" fill="#b3cdfe"/><rect x="810" y="510" width="30" height="30" fill="#b2cdfe"/><rect x="840" y="510" width="30" height="30" fill="#b1ccfe"/><rect x="870" y="510" width="30" height="30" fill="#b0ccfe"/><rect x="900" y="510" width="30" height="30" fill="#afcbfe"/><rect x="930" y="510" width="30" height="30" fill="#aecafe"/><rect x="960" y="510" width="30" height="30" fill="#acc8fe"/><rect x="990" y="510" width="30" height="30" fill="#aac7fe"/><rect x="1020" y="510" width="30" height="30" fill="#a7c5fd"/><rect x="1050" y="510" width="30" height="30" fill="#a5c3fd"/><rect x="1080" y="510" width="30" height="30" fill="#a3c2fd"/><rect x="1110" y="510" width="30" height="30" fill="#a3c2fd"/><rect x="-30" y="540" width="30" height="30" fill="#f5bd9e"/><rect x="0" y="540" width="30" height="30" fill="#f5be9e"/><rect x="30" y="540" width="30" height="30" fill="#f4bf9f"/><rect x="60" y="540" width="30" height="30" fill="#f3c0a6"/><rect x="90" y="540" width="30" height="30" fill="#f2c0b1"/><rect x="120" y="540" width="30" height="30" fill="#f1c0be"/><rect x="150" y="540" width="30" height="30" fill="#f0c1cb"/><rect x="180" y="540" width="30" height="30" fill="#efc2d6"/><rect x="210" y="540" width="30" height="30" fill="#edc3e0"/><rect x="240" y="540" width="30" height="30" fill="#ecc4e8"/><rect x="270" y="540" width="30" height="30" fill="#e9c5ee"/><rect x="300" y="540" width="30" height="30" fill="#e4c6f3"/><rect x="330" y="540" width="30" height="30" fill="#dfc6f7"/><rect x="360" y="540" width="30" height="30" fill="#d9c6f9"/><rect x="390" y="540" width="30" height="30" fill="#d2c6fb"/><rect x="420" y="540" width="30" height="30" fill="#ccc6fc"/><rect x="450" y="540" width="30" height="30" fill="#c7c6fc"/><rect x="480" y="540" width="30" height="30" fill="#c2c6fd"/><rect x="510" y="540" width="30" height="30" fill="#bfc7fe"/><rect x="540" y="540" width="30" height="30" fill="#bcc8fe"/><rect x="570" y="540" width="30" height="30" fill="#bac8fe"/><rect x="600" y="540" width="30" height="30" fill="#b8c9fe"/><rect x="630" y="540" width="30" height="30" fill="#b6cafe"/><rect x="660" y="540" width="30" height="30" fill="#b5caff"/><rect x="690" y="540" width="30" height="30" fill="#b4cbff"/><rect x="720" y="540" width="30" height="30" fill="#b4cbff"/><rect x="750" y="540" width="30" height="30" fill="#b3cbfe"/><rect x="780" y="540" width="30" height="30" fill="#b2cbfe"/><rect x="810" y="540" width="30" height="30" fill="#b1cbfe"/><rect x="840" y="540" width="30" height="30" fill="#b1cafe"/><rect x="870" y="540" width="30" height="30" fill="#b0cafe"/><rect x="900" y="540" width="30" height="30" fill="#aec9fe"/><rect x="930" y="540" width="30" height="30" fill="#adc8fe"/><rect x="960" y="540" width="30" height="30" fill="#abc7fe"/><rect x="990" y="540" width="30" height="30" fill="#a9c5fd"/><rect x="1020" y="540" width="30" height="30" fill="#a7c3fd"/><rect x="1050" y="540" width="30" height="30" fill="#a4c1fd"/><rect x="1080" y="540" width="30" height="30" fill="#a3c0fd"/><rect x="1110" y="540" width="30" height="30" fill="#a3c0fd"/><rect x="-30" y="570" width="30" height="30" fill="#f7ba98"/><rect x="0" y="570" width="30" height="30" fill="#f7bb98"/><rect x="30" y="570" width="30" height="30" fill="#f6bc99"/><rect x="60" y="570" width="30" height="30" fill="#f5bda2"/><rect x="90" y="570" width="30" height="30" fill="#f4bdaf"/><rect x="120" y="570" width="30" height="30" fill="#f3bdbd"/><rect x="150" y="570" width="30" height="30" fill="#f2becb"/><rect x="180" y="570" width="30" height="30" fill="#f1bfd6"/><rect x="210" y="570" width="30" height="30" fill="#f0c1e0"/><rect x="240" y="570" width="30" height="30" fill="#eec2e8"/><rect x="270" y="570" width="30" height="30" fill="#ecc3ef"/><rect x="300" y="570" width="30" height="30" fill="#e7c4f4"/><rect x="330" y="570" width="30" height="30" fill="#e1c4f7"/><rect x="360" y="570" width="30" height="30" fill="#dac3f9"/><rect x="390" y="570" width="30" height="30" fill="#d3c3fb"/><rect x="420" y="570" width="30" height="30" fill="#ccc3fb"/><rect x="450" y="570" width="30" height="30" fill="#c6c3fc"/><rect x="480" y="570" width="30" height="30" fill="#c2c4fc"/><rect x="510" y="570" width="30" height="30" fill="#bec4fd"/><rect x="540" y="570" width="30" height="30" fill="#bbc5fd"/><rect x="570" y="570" width="30" height="30" fill="#b9c6fe"/><rect x="600" y="570" width="30" height="30" fill="#b7c7fe"/><rect x="630" y="570" width="30" height="30" fill="#b6c7fe"/><rect x="660" y="570" width="30" height="30" fill="#b5c8fe"/><rect x="690" y="570" width="30" height="30" fill="#b4c8fe"/><rect x="720" y="570" width="30" height="30" fill="#b3c9fe"/><rect x="750" y="570" width="30" height="30" fill="#b2c9fe"/><rect x="780" y="570" width="30" height="30" fill="#b2c9fe"/><rect x="810" y="570" width="30" height="30" fill="#b1c9fe"/><rect x="840" y="570" width="30" height="30" fill="#b0c8fe"/><rect x="870" y="570" width="30" height="30" fill="#afc8fe"/><rect x="900" y="570" width="30" height="30" fill="#aec7fe"/><rect x="930" y="570" width="30" height="30" fill="#acc6fe"/><rect x="960" y="570" width="30" height="30" fill="#abc5fd"/><rect x="990" y="570" width="30" height="30" fill="#a9c3fd"/><rect x="1020" y="570" width="30" height="30" fill="#a7c2fd"/><rect x="1050" y="570" width="30" height="30" fill="#a4c0fd"/><rect x="1080" y="570" width="30" height="30" fill="#a3bffd"/><rect x="1110" y="570" width="30" height="30" fill="#a3bffd"/><rect x="-30" y="600" width="30" height="30" fill="#f9b697"/><rect x="0" y="600" width="30" height="30" fill="#f9b798"/><rect x="30" y="600" width="30" height="30" fill="#f8b89b"/><rect x="60" y="600" width="30" height="30" fill="#f7b9a4"/><rect x="90" y="600" width="30" height="30" fill="#f5bab1"/><rect x="120" y="600" width="30" height="30" fill="#f4babf"/><rect x="150" y="600" width="30" height="30" fill="#f3bbcc"/><rect x="180" y="600" width="30" height="30" fill="#f3bdd7"/><rect x="210" y="600" width="30" height="30" fill="#f2bee1"/><rect x="240" y="600" width="30" height="30" fill="#f1bfe9"/><rect x="270" y="600" width="30" height="30" fill="#eec1f0"/><rect x="300" y="600" width="30" height="30" fill="#eac1f5"/><rect x="330" y="600" width="30" height="30" fill="#e3c1f7"/><rect x="360" y="600" width="30" height="30" fill="#dbc1f9"/><rect x="390" y="600" width="30" height="30" fill="#d3c1fa"/><rect x="420" y="600" width="30" height="30" fill="#ccc0fb"/><rect x="450" y="600" width="30" height="30" fill="#c6c0fb"/><rect x="480" y="600" width="30" height="30" fill="#c1c1fc"/><rect x="510" y="600" width="30" height="30" fill="#bec2fc"/><rect x="540" y="600" width="30" height="30" fill="#bbc2fd"/><rect x="570" y="600" width="30" height="30" fill="#b9c3fd"/><rect x="600" y="600" width="30" height="30" fill="#b7c4fe"/><rect x="630" y="600" width="30" height="30" fill="#b6c5fe"/><rect x="660" y="600" width="30" height="30" fill="#b5c6fe"/><rect x="690" y="600" width="30" height="30" fill="#b4c6fe"/><rect x="720" y="600" width="30" height="30" fill="#b3c6fe"/><rect x="750" y="600" width="30" height="30" fill="#b2c6fe"/><rect x="780" y="600" width="30" height="30" fill="#b1c6fe"/><rect x="810" y="600" width="30" height="30" fill="#b0c6fe"/><rect x="840" y="600" width="30" height="30" fill="#afc6fe"/><rect x="870" y="600" width="30" height="30" fill="#aec5fe"/><rect x="900" y="600" width="30" height="30" fill="#adc5fe"/><rect x="930" y="600" width="30" height="30" fill="#acc4fd"/><rect x="960" y="600" width="30" height="30" fill="#aac3fd"/><rect x="990" y="600" width="30" height="30" fill="#a8c1fd"/><rect x="1020" y="600" width="30" height="30" fill="#a6c0fd"/><rect x="1050" y="600" width="30" height="30" fill="#a4befd"/><rect x="1080" y="600" width="30" height="30" fill="#a2bdfd"/><rect x="1110" y="600" width="30" height="30" fill="#a2bdfd"/><rect x="-30" y="630" width="30" height="30" fill="#fbb299"/><rect x="0" y="630" width="30" height="30" fill="#fab39b"/><rect x="30" y="630" width="30" height="30" fill="#f9b49f"/><rect x="60" y="630" width="30" height="30" fill="#f8b5a8"/><rect x="90" y="630" width="30" height="30" fill="#f7b6b4"/><rect x="120" y="630" width="30" height="30" fill="#f6b7c1"/><rect x="150" y="630" width="30" height="30" fill="#f5b8ce"/><rect x="180" y="630" width="30" height="30" fill="#f4bad8"/><rect x="210" y="630" width="30" height="30" fill="#f4bbe1"/><rect x="240" y="630" width="30" height="30" fill="#f2bde9"/><rect x="270" y="630" width="30" height="30" fill="#f0bef0"/><rect x="300" y="630" width="30" height="30" fill="#ebbff4"/><rect x="330" y="630" width="30" height="30" fill="#e4bff7"/><rect x="360" y="630" width="30" height="30" fill="#dcbef9"/><rect x="390" y="630" width="30" height="30" fill="#d4befa"/><rect x="420" y="630" width="30" height="30" fill="#ccbefa"/><rect x="450" y="630" width="30" height="30" fill="#c6befb"/><rect x="480" y="630" width="30" height="30" fill="#c2befb"/><rect x="510" y="630" width="30" height="30" fill="#bebffc"/><rect x="540" y="630" width="30" height="30" fill="#bcc0fc"/><rect x="570" y="630" width="30" height="30" fill="#b9c1fd"/><rect x="600" y="630" width="30" height="30" fill="#b7c2fd"/><rect x="630" y="630" width="30" height="30" fill="#b6c2fd"/><rect x="660" y="630" width="30" height="30" fill="#b5c3fd"/><rect x="690" y="630" width="30" height="30" fill="#b4c4fe"/><rect x="720" y="630" width="30" height="30" fill="#b3c4fe"/><rect x="750" y="630" width="30" height="30" fill="#b2c4fe"/><rect x="780" y="630" width="30" height="30" fill="#b1c4fe"/><rect x="810" y="630" width="30" height="30" fill="#b0c4fe"/><rect x="840" y="630" width="30" height="30" fill="#afc3fe"/><rect x="870" y="630" width="30" height="30" fill="#aec3fd"/><rect x="900" y="630" width="30" height="30" fill="#adc2fd"/><rect x="930" y="630" width="30" height="30" fill="#abc1fd"/><rect x="960" y="630" width="30" height="30" fill="#aac0fd"/><rect x="990" y="630" width="30" height="30" fill="#a8bffd"/><rect x="1020" y="630" width="30" height="30" fill="#a6befd"/><rect x="1050" y="630" width="30" height="30" fill="#a3bcfd"/><rect x="1080" y="630" width="30" height="30" fill="#a2bbfc"/><rect x="1110" y="630" width="30" height="30" fill="#a2bbfc"/><rect x="-30" y="660" width="30" height="30" fill="#fbb299"/><rect x="0" y="660" width="30" height="30" fill="#fab29b"/><rect x="30" y="660" width="30" height="30" fill="#f9b4a0"/><rect x="60" y="660" width="30" height="30" fill="#f8b5a8"/><rect x="90" y="660" width="30" height="30" fill="#f7b6b4"/><rect x="120" y="660" width="30" height="30" fill="#f6b7c2"/><rect x="150" y="660" width="30" height="30" fill="#f5b8ce"/><rect x="180" y="660" width="30" height="30" fill="#f4b9d8"/><rect x="210" y="660" width="30" height="30" fill="#f4bbe1"/><rect x="240" y="660" width="30" height="30" fill="#f2bce9"/><rect x="270" y="660" width="30" height="30" fill="#f0bef0"/><rect x="300" y="660" width="30" height="30" fill="#ebbef4"/><rect x="330" y="660" width="30" height="30" fill="#e4bef7"/><rect x="360" y="660" width="30" height="30" fill="#dcbef9"/><rect x="390" y="660" width="30" height="30" fill="#d4bef9"/><rect x="420" y="660" width="30" height="30" fill="#ccbdfa"/><rect x="450" y="660" width="30" height="30" fill="#c6befb"/><rect x="480" y="660" width="30" height="30" fill="#c2befb"/><rect x="510" y="660" width="30" height="30" fill="#bebffc"/><rect x="540" y="660" width="30" height="30" fill="#bcc0fc"/><rect x="570" y="660" width="30" height="30" fill="#b9c1fd"/><rect x="600" y="660" width="30" height="30" fill="#b7c1fd"/><rect x="630" y="660" width="30" height="30" fill="#b6c2fd"/><rect x="660" y="660" width="30" height="30" fill="#b5c3fd"/><rect x="690" y="660" width="30" height="30" fill="#b4c3fe"/><rect x="720" y="660" width="30" height="30" fill="#b3c4fe"/><rect x="750" y="660" width="30" height="30" fill="#b2c4fe"/><rect x="780" y="660" width="30" height="30" fill="#b1c4fe"/><rect x="810" y="660" width="30" height="30" fill="#b0c4fe"/><rect x="840" y="660" width="30" height="30" fill="#afc3fe"/><rect x="870" y="660" width="30" height="30" fill="#aec3fd"/><rect x="900" y="660" width="30" height="30" fill="#adc2fd"/><rect x="930" y="660" width="30" height="30" fill="#abc1fd"/><rect x="960" y="660" width="30" height="30" fill="#aac0fd"/><rect x="990" y="660" width="30" height="30" fill="#a8bffd"/><rect x="1020" y="660" width="30" height="30" fill="#a6bdfd"/><rect x="1050" y="660" width="30" height="30" fill="#a3bcfd"/><rect x="1080" y="660" width="30" height="30" fill="#a2bbfc"/><rect x="1110" y="660" width="30" height="30" fill="#a2bbfc"/></g></svg>
<div id="win">
  <div id="hdr"><div class="pc">
  <svg class="abs" style="left:130px;top:76px" width="11.5" height="11.5" viewBox="0 0 11.5 11.5"><path d="M5.7 1 L10.5 4.2 Q10.8 4.4 10.8 4.8 V10.3 Q10.8 10.75 10.35 10.75 H7.1 V7.6 H3.75 V10.75 H1.05 Q0.6 10.75 0.6 10.3 V4.8 Q0.6 4.4 0.9 4.2 Z" fill="#202328"/></svg>
  <span class="t" style="left:149.2px;top:71.6px;font-size:8.85px;font-weight:500;color:#1f2329;-webkit-text-stroke:0.3px #1f2329">简历–上海外国语大学–陆宜.pdf</span>
  <svg class="abs" style="left:277.5px;top:71.5px" width="9" height="9" viewBox="0 0 9 9"><path d="M4.5 0.8 L5.6 3.2 L8.2 3.5 L6.3 5.2 L6.8 7.8 L4.5 6.5 L2.2 7.8 L2.7 5.2 L0.8 3.5 L3.4 3.2 Z" fill="none" stroke="#2b2f36" stroke-width="0.8" stroke-linejoin="round"/></svg>
  <span class="t" style="left:149.5px;top:84.5px;font-size:7.4px;color:#a8abb2">陆宜的文档</span>
  <span class="abs" style="left:194px;top:84.5px;width:1px;height:8px;background:#e2e3e6"></span>
  <span class="t" style="left:202.5px;top:84.5px;font-size:7.6px;color:#a8abb2">最近修改：2022-10-10 12:00</span>
  <div class="btn" style="left:451px;width:63px"><span class="btxt" style="left:5px">转为钉钉文档</span></div>
  <div class="btn" style="left:519.5px;width:38.5px">
    <svg class="abs" style="left:3.5px;top:4px" width="9" height="9" viewBox="0 0 9 9"><path d="M4 1 H1.2 Q0.8 1 0.8 1.4 V7.8 Q0.8 8.2 1.2 8.2 H7.6 Q8 8.2 8 7.8 V5" fill="none" stroke="#3a3f47" stroke-width="0.85"/><path d="M5.2 0.9 H8.1 V3.8 M8.1 0.9 L4.2 4.8" fill="none" stroke="#3a3f47" stroke-width="0.85"/></svg>
    <span class="btxt" style="left:15.5px">分享</span></div>
  <div class="btn" style="left:563.5px;width:39px">
    <svg class="abs" style="left:4px;top:4px" width="9" height="9" viewBox="0 0 9 9"><path d="M1.2 7 L6.4 1.6 L7.6 2.8 L2.4 8 L1 8.2 Z" fill="none" stroke="#4b5275" stroke-width="0.8" stroke-linejoin="round"/><path d="M1 8.4 H8" stroke="#4b5275" stroke-width="0.8"/></svg>
    <span class="btxt" style="left:16px">编辑</span></div>
  <div class="btn" style="left:607.5px;width:17px">
    <svg class="abs" style="left:3.5px;top:4px" width="9" height="9" viewBox="0 0 9 9"><path d="M4.5 0.6 V6 M2.2 3.8 L4.5 6.1 L6.8 3.8" fill="none" stroke="#4b5275" stroke-width="0.85"/><path d="M0.8 8.3 H8.2" stroke="#4b5275" stroke-width="0.9"/></svg></div>
  <div class="btn" style="left:630.5px;width:17px">
    <svg class="abs" style="left:3px;top:7px" width="10" height="3" viewBox="0 0 10 3"><circle cx="1.5" cy="1.5" r="0.75" fill="#3a3f47"/><circle cx="5" cy="1.5" r="0.75" fill="#3a3f47"/><circle cx="8.5" cy="1.5" r="0.75" fill="#3a3f47"/></svg></div>
</div></div>
  <div id="docarea"><div id="page"></div><div class="pc doc" style="top:-101px">
<span class="t" style="left:186.5px;top:146.74px;font-size:19.0px;color:#222;">陆宜</span>
<span class="t" style="left:187.7px;top:176.18px;font-size:8.0px;color:#1d1d1f;"><b>邮箱：</b>zhi<i class="blur" style="width:43.7px"></i>@163.com</span>
<span class="t" style="left:343.0px;top:176.18px;font-size:8.0px;color:#1d1d1f;"><b>联系方式：</b>138<i class="blur" style="width:19.3px"></i>2721</span>
<span class="t" style="left:187.7px;top:187.98px;font-size:8.0px;color:#1d1d1f;"><b>出生年月：</b>2000.12</span>
<span class="t" style="left:333.0px;top:187.98px;font-size:8.0px;color:#1d1d1f;"><b>微信号：</b>hua<i class="blur" style="width:30.3px"></i>gepi</span>
<span class="t" style="left:187.0px;top:205.47px;font-size:10.8px;color:#1a1a1a;-webkit-text-stroke:0.25px #1a1a1a;">教育背景</span>
<span class="t" style="left:187.3px;top:223.68px;font-size:8.0px;color:#1d1d1f;-webkit-text-stroke:0.28px #1d1d1f;width:165.7px;text-align:justify;text-align-last:justify;">硕士（保研）｜上海外国语大学｜新闻与传播</span>
<span class="t" style="left:520.5px;top:225.51px;font-size:7.75px;color:#1d1d1f;-webkit-text-stroke:0.28px #1d1d1f;">2023.09–2025.06</span>
<span class="t" style="left:203.4px;top:236.18px;font-size:8.0px;color:#1d1d1f;width:59.1px;text-align:justify;text-align-last:justify;">GPA：3.94 / 4</span>
<span class="t" style="left:187.3px;top:247.68px;font-size:8.0px;color:#1d1d1f;-webkit-text-stroke:0.28px #1d1d1f;width:117.3px;text-align:justify;text-align-last:justify;">本科｜上海外国语大学｜新闻学</span>
<span class="t" style="left:520.5px;top:249.31px;font-size:7.75px;color:#1d1d1f;-webkit-text-stroke:0.28px #1d1d1f;">2019.09–2023.06</span>
<span class="t" style="left:203.4px;top:259.38px;font-size:8.0px;color:#1d1d1f;width:292.7px;text-align:justify;text-align-last:justify;">GPA：3.89 / 4&nbsp;&nbsp;&nbsp;排名：4 / 46&nbsp;&nbsp;&nbsp;多次获特等（前 5%）、一等（前 10%）奖学金</span>
<span class="t" style="left:187.0px;top:276.97px;font-size:10.8px;color:#1a1a1a;-webkit-text-stroke:0.25px #1a1a1a;">实践经历</span>
<span class="t" style="left:187.3px;top:295.98px;font-size:8.0px;color:#1d1d1f;-webkit-text-stroke:0.28px #1d1d1f;width:131.2px;text-align:justify;text-align-last:justify;">北京新中商数据科技公司｜内容运营</span>
<span class="t" style="left:518.5px;top:297.62px;font-size:7.75px;color:#1d1d1f;-webkit-text-stroke:0.28px #1d1d1f;">2023.04–2023.06</span>
<span class="t" style="left:203.4px;top:307.98px;font-size:8.0px;color:#1d1d1f;width:387.6px;text-align:justify;text-align-last:justify;">关注行业市场，分析商业数据，匹配营销节点，制定内容传播策略；运营商业地产资讯类公众号<i class="ql">“</i>RET 睿意</span>
<span class="t" style="left:203.4px;top:319.88px;font-size:8.0px;color:#1d1d1f;width:345.0px;text-align:justify;text-align-last:justify;">德<i class="qr">”</i><i class="ql">“</i>中商数据<i class="qr">”</i>，选题、撰稿、排版，包括会议总结、活动预告、项目介绍等，最高浏览量近 1w</span>
<span class="t" style="left:203.4px;top:331.88px;font-size:8.0px;color:#1d1d1f;width:309.6px;text-align:justify;text-align-last:justify;">运营公司官方视频号：剪辑、校对、推荐语撰写，协助策划直播沙龙，观看人次 1000+</span>
<span class="t" style="left:187.3px;top:343.88px;font-size:8.0px;color:#1d1d1f;-webkit-text-stroke:0.28px #1d1d1f;width:139.3px;text-align:justify;text-align-last:justify;">杭州青橙青年服务发展中心｜活动运营</span>
<span class="t" style="left:518.5px;top:345.51px;font-size:7.75px;color:#1d1d1f;-webkit-text-stroke:0.28px #1d1d1f;">2022.10–2023.02</span>
<span class="t" style="left:203.4px;top:355.88px;font-size:8.0px;color:#1d1d1f;width:387.6px;text-align:justify;text-align-last:justify;">运营余杭区、临平区女企业家协会：策划徒步、沙龙、年会等活动，负责方案策划、行程对接、场地联络、物</span>
<span class="t" style="left:203.4px;top:367.88px;font-size:8.0px;color:#1d1d1f;width:250.6px;text-align:justify;text-align-last:justify;">料设计，收集活动反馈并跟踪分析总结，并协助招新会员，扩大影响力</span>
<span class="t" style="left:203.4px;top:379.88px;font-size:8.0px;color:#1d1d1f;width:300.4px;text-align:justify;text-align-last:justify;">运营区党委组织部人才办微信公众号<i class="ql">“</i>云上雨林<i class="qr">”</i>，制作年度报告 H5，设计节日海报</span>
<span class="t" style="left:203.4px;top:391.88px;font-size:8.0px;color:#1d1d1f;width:206.7px;text-align:justify;text-align-last:justify;">运营杭州市多所中小学公众号，推文单篇最高浏览量 6.1w</span>
<span class="t" style="left:187.3px;top:403.78px;font-size:8.0px;color:#1d1d1f;-webkit-text-stroke:0.28px #1d1d1f;width:172.0px;text-align:justify;text-align-last:justify;">上海市徐汇区人民政府团区委办公室｜内容运营</span>
<span class="t" style="left:518.5px;top:405.42px;font-size:7.75px;color:#1d1d1f;-webkit-text-stroke:0.28px #1d1d1f;">2021.07–2021.08</span>
<span class="t" style="left:203.4px;top:415.68px;font-size:8.0px;color:#1d1d1f;width:335.1px;text-align:justify;text-align-last:justify;">收集社情民意，撰写区委活动简讯，起草<i class="ql">“</i>社区少工委工作指引<i class="qr">”</i><i class="ql">“</i>人民城市意见建议<i class="qr">”</i>等文件</span>
<span class="t" style="left:203.4px;top:427.68px;font-size:8.0px;color:#1d1d1f;width:387.4px;text-align:justify;text-align-last:justify;">作为优秀大学生挂职宣传干事，策划<i class="ql">“</i>职业初体验<i class="qr">”</i><i class="ql">“</i>红色故址寻访<i class="qr">”</i><i class="ql">“</i>结业仪式<i class="qr">”</i>等品牌活动，完成视频剪辑、</span>
<span class="t" style="left:203.4px;top:439.68px;font-size:8.0px;color:#1d1d1f;width:332.4px;text-align:justify;text-align-last:justify;">随机采访、文案撰写，成果发布于公众号<i class="ql">“</i>青春徐汇<i class="qr">”</i>，单篇浏览量平均 2500+，最高 4300+</span>
<span class="t" style="left:187.3px;top:452.08px;font-size:8.0px;color:#1d1d1f;-webkit-text-stroke:0.28px #1d1d1f;width:176.3px;text-align:justify;text-align-last:justify;"><i class="ql">“</i>上海松江<i class="qr">”</i>客户端英文频道｜全英文采写、编译</span>
<span class="t" style="left:521.5px;top:453.92px;font-size:7.75px;color:#1d1d1f;-webkit-text-stroke:0.28px #1d1d1f;">2021.10–2024.01</span>
<span class="t" style="left:203.4px;top:463.68px;font-size:8.0px;color:#1d1d1f;width:387.4px;text-align:justify;text-align-last:justify;">编译<i class="ql">“</i>疫情下的护士节<i class="qr">”</i><i class="ql">“</i>智慧仓储助快速复工<i class="qr">”</i>等 20 篇报道，领域涉及在地民生、科创、商业等等，单篇浏</span>
<span class="t" style="left:203.4px;top:475.68px;font-size:8.0px;color:#1d1d1f;width:101.4px;text-align:justify;text-align-last:justify;">览量平均 8500+，最高 1w+</span>
<span class="t" style="left:203.4px;top:487.68px;font-size:8.0px;color:#1d1d1f;width:386.6px;text-align:justify;text-align-last:justify;">自主选题、采撷与撰稿<i class="ql">“</i>G60 科创云廊商户经营故事<i class="qr">”</i>和<i class="ql">“</i>驻车墩影视基地群演生存环境<i class="qr">”</i>2 篇英语新闻特写，</span>
<span class="t" style="left:203.4px;top:499.68px;font-size:8.0px;color:#1d1d1f;width:68.6px;text-align:justify;text-align-last:justify;">平均浏览量 7600+</span>
<span class="t" style="left:187.0px;top:517.47px;font-size:10.8px;color:#1a1a1a;-webkit-text-stroke:0.25px #1a1a1a;">校园经历</span>
<span class="t" style="left:187.3px;top:536.18px;font-size:8.0px;color:#1d1d1f;-webkit-text-stroke:0.28px #1d1d1f;">上海外国语大学人事处｜职员</span>
<span class="t" style="left:518.1px;top:537.92px;font-size:7.75px;color:#1d1d1f;-webkit-text-stroke:0.28px #1d1d1f;">2023.09–2024.03</span>
<span class="t" style="left:203.4px;top:547.68px;font-size:8.0px;color:#1d1d1f;width:104.6px;text-align:justify;text-align-last:justify;">协助全校各部门及院系统计：</span>
<span class="t" style="left:203.4px;top:559.68px;font-size:8.0px;color:#1d1d1f;width:387.0px;text-align:justify;text-align-last:justify;">参与行政管理人员秋招、春招；通知拟定、候选人联络、安排面试，跟进面试流程；办理员工入职、离职手续，</span>
<span class="t" style="left:203.4px;top:571.68px;font-size:8.0px;color:#1d1d1f;width:88.6px;text-align:justify;text-align-last:justify;">协理招聘事项等日常邮件</span>
<span class="abs" style="left:187px;top:214.0px;width:404px;height:1px;background:#555"></span>
<span class="abs" style="left:187px;top:286.5px;width:404px;height:1px;background:#555"></span>
<span class="abs" style="left:187px;top:526.8px;width:404px;height:1px;background:#555"></span>
<svg class="abs" style="left:187.5px;top:237.5px" width="7" height="6" viewBox="0 0 7 6"><path d="M0.3 0.3 L6.7 3 L0.3 5.7 L2 3 Z" fill="#1d1d1f"/></svg>
<svg class="abs" style="left:187.5px;top:260.7px" width="7" height="6" viewBox="0 0 7 6"><path d="M0.3 0.3 L6.7 3 L0.3 5.7 L2 3 Z" fill="#1d1d1f"/></svg>
<svg class="abs" style="left:187.5px;top:309.3px" width="7" height="6" viewBox="0 0 7 6"><path d="M0.3 0.3 L6.7 3 L0.3 5.7 L2 3 Z" fill="#1d1d1f"/></svg>
<svg class="abs" style="left:187.5px;top:333.2px" width="7" height="6" viewBox="0 0 7 6"><path d="M0.3 0.3 L6.7 3 L0.3 5.7 L2 3 Z" fill="#1d1d1f"/></svg>
<svg class="abs" style="left:187.5px;top:357.2px" width="7" height="6" viewBox="0 0 7 6"><path d="M0.3 0.3 L6.7 3 L0.3 5.7 L2 3 Z" fill="#1d1d1f"/></svg>
<svg class="abs" style="left:187.5px;top:381.2px" width="7" height="6" viewBox="0 0 7 6"><path d="M0.3 0.3 L6.7 3 L0.3 5.7 L2 3 Z" fill="#1d1d1f"/></svg>
<svg class="abs" style="left:187.5px;top:393.2px" width="7" height="6" viewBox="0 0 7 6"><path d="M0.3 0.3 L6.7 3 L0.3 5.7 L2 3 Z" fill="#1d1d1f"/></svg>
<svg class="abs" style="left:187.5px;top:417.0px" width="7" height="6" viewBox="0 0 7 6"><path d="M0.3 0.3 L6.7 3 L0.3 5.7 L2 3 Z" fill="#1d1d1f"/></svg>
<svg class="abs" style="left:187.5px;top:429.0px" width="7" height="6" viewBox="0 0 7 6"><path d="M0.3 0.3 L6.7 3 L0.3 5.7 L2 3 Z" fill="#1d1d1f"/></svg>
<svg class="abs" style="left:187.5px;top:465.0px" width="7" height="6" viewBox="0 0 7 6"><path d="M0.3 0.3 L6.7 3 L0.3 5.7 L2 3 Z" fill="#1d1d1f"/></svg>
<svg class="abs" style="left:187.5px;top:489.0px" width="7" height="6" viewBox="0 0 7 6"><path d="M0.3 0.3 L6.7 3 L0.3 5.7 L2 3 Z" fill="#1d1d1f"/></svg>
<svg class="abs" style="left:187.5px;top:549.0px" width="7" height="6" viewBox="0 0 7 6"><path d="M0.3 0.3 L6.7 3 L0.3 5.7 L2 3 Z" fill="#1d1d1f"/></svg>
<svg class="abs" style="left:187.5px;top:561.0px" width="7" height="6" viewBox="0 0 7 6"><path d="M0.3 0.3 L6.7 3 L0.3 5.7 L2 3 Z" fill="#1d1d1f"/></svg>
<svg class="abs" style="left:512px;top:141.3px" width="62.2" height="62.2" viewBox="0 0 62 62">
<defs><filter id="pb" x="-5%" y="-5%" width="110%" height="110%"><feGaussianBlur stdDeviation="0.5"/></filter>
<radialGradient id="skin" cx="0.5" cy="0.5" r="0.6"><stop offset="0" stop-color="#f7e4dc"/><stop offset="1" stop-color="#eac8bb"/></radialGradient></defs>
<rect width="62" height="62" fill="#e4e2e0"/>
<g filter="url(#pb)">
<path d="M16.5 46.5 Q15.2 36 16.2 24 Q17.5 8 30.5 5.3 Q43.5 6.5 45.8 22 Q47 34 46 45.5 Q40 47.5 35 45 L27 45 Q21 47.5 16.5 46.5 Z" fill="#2b2321"/>
<path d="M25.5 38 L36.5 38 L37.5 49 L24.5 49 Z" fill="#e9cbbe"/>
<ellipse cx="31" cy="27" rx="11.3" ry="14.6" fill="url(#skin)"/>
<path d="M19 25 Q18.5 12 27 9 Q30 8.2 30.5 9.5 Q29.5 15 24.5 20 Q22 22.5 19.8 24.5 Z" fill="#2b2321"/>
<path d="M43 25 Q43.5 12 35 9 Q32 8.2 31.5 9.5 Q32.5 15 37.5 20 Q40 22.5 42.2 24.5 Z" fill="#2b2321"/>
<ellipse cx="25.6" cy="23.6" rx="1.7" ry="0.85" fill="#3f3232"/><ellipse cx="36.2" cy="23.6" rx="1.7" ry="0.85" fill="#3f3232"/>
<path d="M27 32.4 Q31 36.4 35 32.4 Q31 33.2 27 32.4 Z" fill="#dc5a6c"/>
<path d="M27.8 32.7 Q31 33.5 34.2 32.7 L33.6 33.7 Q31 34.3 28.4 33.7 Z" fill="#fff2f2"/>
<path d="M0 62 L0.5 57 Q2.5 50.5 14 48.5 Q20 47.2 22 46.5 Q31 44.5 40 46.5 Q43 47.5 48 48.5 Q59.5 50.5 61.5 57 L62 62 Z" fill="#e7dcd2"/>
<path d="M21 47 Q31 43.5 41 47 L41.5 53 Q31 56.5 20.5 53 Z" fill="#eee5dd"/>
</g>
</svg>
</div></div>
  <div id="ai"><div class="pc" style="left:-658px">
  <span class="t" style="left:667.5px;top:78px;font-size:9.8px;color:#1f2329;-webkit-text-stroke:0.2px #1f2329">AI助理</span>
  <span class="abs" style="left:699.5px;top:77.3px;width:30.2px;height:10.2px;border:0.8px solid #e8e6ee;border-radius:2px"></span>
  <span class="t" style="left:702.3px;top:81px;font-size:6.3px;color:#a3a3aa">邀请测试</span>
  <svg class="abs" style="left:834.5px;top:76px" width="12" height="12" viewBox="0 0 12 12"><path d="M2.6 6 A4.2 4.2 0 1 1 3.9 9.1" fill="none" stroke="#33363c" stroke-width="0.95"/><path d="M0.7 5.2 L4.4 5.2 L2.5 7.6 Z" fill="#33363c"/><path d="M6.8 3.9 V6.3 L8.5 7.5" fill="none" stroke="#33363c" stroke-width="0.95"/></svg>
  <span class="abs" style="left:854px;top:77px;width:0.8px;height:9.5px;background:#d9d9e0"></span>
  <svg class="abs" style="left:862.5px;top:80.5px" width="11" height="3" viewBox="0 0 11 3"><circle cx="1.3" cy="1.5" r="0.75" fill="#33363c"/><circle cx="5.5" cy="1.5" r="0.75" fill="#33363c"/><circle cx="9.7" cy="1.5" r="0.75" fill="#33363c"/></svg>
  <div class="chip" style="left:667.5px;width:58.5px"></div>
  <svg class="abs" style="left:672px;top:504.5px" width="11" height="11" viewBox="0 0 11 11"><defs><linearGradient id="g3" x1="0" y1="0" x2="0" y2="1"><stop offset="0" stop-color="#9a6cf7"/><stop offset="0.35" stop-color="#1a86fb"/><stop offset="1" stop-color="#0b8cff"/></linearGradient></defs><path d="M3.6 3.3 Q4.1 6 7 6.8 Q4.1 7.6 3.6 10.2 Q3.1 7.6 0.2 6.8 Q3.1 6 3.6 3.3 Z" fill="url(#g3)"/><path d="M8 0.4 Q8.3 1.7 9.5 2 Q8.3 2.3 8 3.6 Q7.7 2.3 6.5 2 Q7.7 1.7 8 0.4 Z" fill="#8c5cf6"/><circle cx="8" cy="2" r="0.9" fill="#8c5cf6"/></svg>
  <span class="ctxt" style="left:686.5px">指令中心</span>
  <div class="chip" style="left:731px;width:45px"></div><span class="ctxt" style="left:736.5px">简历诊断</span>
  <div class="chip" style="left:781px;width:45px"></div><span class="ctxt" style="left:786.5px">模拟面试</span>
  <div class="chip" style="left:831px;width:45px"></div><span class="ctxt" style="left:836.5px">简历投递</span>
  <div class="abs" style="left:667.3px;top:524.3px;width:229.5px;height:50.3px;border-radius:7px;padding:1px;background:linear-gradient(90deg,#dcbaf6 0%,#c6c8fa 45%,#a6dcf8 100%)"><div style="width:100%;height:100%;border-radius:6px;background:#fff"></div></div>
  <span class="abs" style="left:675.2px;top:534.6px;width:0.9px;height:8.4px;background:#555"></span>
  <span class="t" style="left:677.3px;top:534.6px;font-size:8.6px;color:#c3c5cb">请输入想要了解的内容</span>
  <svg class="abs" style="left:674.5px;top:557.3px" width="11" height="11.5" viewBox="0 0 11 11.5"><path d="M5.6 2.6 L1.9 6.5 Q0.3 8.2 1.5 9.6 Q2.8 10.9 4.5 9.2 L9.2 4.2 Q10.5 2.8 9.6 1.6 Q8.5 0.4 7 1.8 L2.9 6.2 Q2.1 7.1 2.7 7.7 Q3.3 8.3 4.1 7.4 L7.8 3.4" fill="none" stroke="#777a80" stroke-width="0.8" stroke-linecap="round"/></svg>
  <span class="t" style="left:688.9px;top:559px;font-size:8.1px;color:#6a6d73">添加文档</span>
  <svg class="abs" style="left:876.5px;top:555.2px" width="12" height="11.5" viewBox="0 0 12 11.5"><path d="M0.3 0.3 L11.8 5.75 L0.3 11.2 L2.2 5.75 Z M2.2 5.75 H6.5" fill="#b6d2fa" stroke="#b6d2fa" stroke-width="0.3" stroke-linejoin="round"/></svg>
  <svg class="abs" style="left:884px;top:77.8px" width="8.5" height="8.5" viewBox="0 0 8.5 8.5"><path d="M0.4 0.4 L8.1 8.1 M8.1 0.4 L0.4 8.1" stroke="#3a3d43" stroke-width="0.85"/></svg>
</div></div>
</div>
<div id="pop"><div id="popin"><div class="pc" style="left:-589px;top:-107px">
  <span class="t" style="left:613px;top:132.5px;font-size:30px;color:#1f2329;-webkit-text-stroke:0.7px #1f2329">上午好</span>
  <span class="t" style="left:703px;top:130px;font-size:34px;transform:rotate(-12deg);transform-origin:50% 60%">👋</span>
  <span class="t" style="left:613.5px;top:182.6px;font-size:13.3px;color:#3a3d43">我是AI助理，你的个人办公助手。</span>
  <span class="t" style="left:613.5px;top:202.6px;font-size:13.3px;color:#3a3d43">我可以帮助你：</span>
  <div class="card" style="left:601.5px;top:232px;width:347px;height:59.5px"></div>
  <svg class="abs" style="left:614.8px;top:243px" width="15" height="19" viewBox="0 0 15 19"><path d="M2 0 H10.3 L15 4.7 V17 Q15 19 13 19 H2 Q0 19 0 17 V2 Q0 0 2 0 Z" fill="#fe3b50"/><path d="M6.6 5.6 Q6.4 8 6.7 10.2 Q5.4 12 3.6 13.4 M6.7 10.2 Q8.8 11.2 11.2 11.8" fill="none" stroke="#fff" stroke-width="1.05" stroke-linecap="round"/></svg>
  <span class="t" style="left:635.5px;top:247.5px;font-size:13.25px;font-weight:500;color:#1f2329;-webkit-text-stroke:0.2px #1f2329">简历–上海外国语大学–陆宜</span>
  <span class="t" style="left:635.5px;top:267.7px;font-size:11.5px;color:#8f959e">文件大小 54.8KB</span>
  <div class="abs" style="left:869px;top:248.5px;width:68px;height:26.5px;border-radius:4px;background:linear-gradient(90deg,#3b84f7,#2a71f5);box-shadow:0 1px 2px rgba(40,100,240,.15)"></div>
  <span class="t" style="left:876.7px;top:255.8px;font-size:13px;color:#fff">简历诊断</span>
  <div class="card" style="left:601.5px;top:299px;width:169px;height:76px"></div>
  <div class="card" style="left:778.5px;top:299px;width:169.5px;height:76px"></div>
  <span class="t" style="left:614px;top:330.5px;font-size:13px;font-weight:500;color:#1f2329;-webkit-text-stroke:0.2px #1f2329">模拟面试</span>
  <span class="t" style="left:613.5px;top:351.8px;font-size:11.25px;color:#8f959e">实战模拟，面试技巧轻松学</span>
  <span class="t" style="left:790.5px;top:330.5px;font-size:13px;font-weight:500;color:#1f2329;-webkit-text-stroke:0.2px #1f2329">简历投递</span>
  <span class="t" style="left:790.5px;top:351.8px;font-size:11.25px;color:#8f959e">一键精准投递，职位直达HR</span>
  <svg class="abs" style="left:614px;top:308px" width="17" height="15" viewBox="0 0 17 15"><defs><linearGradient id="g1" x1="0" y1="0" x2="1" y2="1"><stop offset="0" stop-color="#b3a9fa"/><stop offset="1" stop-color="#4636f5"/></linearGradient><linearGradient id="g1b" x1="0" y1="0" x2="1" y2="0"><stop offset="0" stop-color="#dcd8fc"/><stop offset="1" stop-color="#c4bcfb"/></linearGradient></defs><circle cx="6.8" cy="4.5" r="3.5" fill="#dcd8fc"/><path d="M0.6 14.3 Q0.9 9.2 6.8 9.2 Q12.6 9.2 13 14.3 Z" fill="url(#g1b)"/><circle cx="11.5" cy="6" r="2.6" fill="url(#g1)"/><path d="M6.5 14.5 Q6.8 10 11.6 10 Q15.8 10.2 16.4 14.5 Z" fill="url(#g1)" opacity="0.95"/></svg>
  <svg class="abs" style="left:791px;top:308px" width="17" height="15.5" viewBox="0 0 17 15.5"><defs><linearGradient id="g2" x1="0" y1="0" x2="0" y2="1"><stop offset="0" stop-color="#5f92f7"/><stop offset="1" stop-color="#d3e2fc"/></linearGradient></defs><rect x="2.2" y="0.3" width="12.8" height="3" rx="1.3" fill="#3d7cf6"/><rect x="1" y="3.8" width="15.2" height="3.6" rx="0.8" fill="#4a85f6"/><path d="M0 8 H4.6 Q5.4 8 5.9 8.7 L6.6 9.7 Q7 10.3 7.8 10.3 H9.2 Q10 10.3 10.4 9.7 L11.1 8.7 Q11.6 8 12.4 8 H17 V14.3 Q17 15.3 16 15.3 H1 Q0 15.3 0 14.3 Z" fill="url(#g2)"/><rect x="6" y="12" width="5.2" height="1.1" rx="0.5" fill="#fff"/></svg>
</div></div></div>
<div id="tb">
  <svg class="abs" style="left:14px;top:9.5px" width="10.5" height="6.5" viewBox="0 0 10.5 6.5"><path d="M0.5 6 L5.25 1 L10 6" fill="none" stroke="#6a6a6a" stroke-width="1.1"/></svg>
  <span class="t" style="left:33.5px;top:9.2px;font-size:7.4px;color:#f0f0f0;-webkit-text-stroke:0.2px #f0f0f0">1/2</span>
  <svg class="abs" style="left:55.5px;top:10px" width="10.5" height="6.5" viewBox="0 0 10.5 6.5"><path d="M0.5 0.5 L5.25 5.5 L10 0.5" fill="none" stroke="#f2f2f2" stroke-width="1.1"/></svg>
  <span class="abs" style="left:73.5px;top:8px;width:0.8px;height:9px;background:#5a5a5a"></span>
  <svg class="abs" style="left:80.5px;top:7px" width="11" height="11" viewBox="0 0 11 11"><circle cx="5.5" cy="5.5" r="4.8" fill="none" stroke="#f2f2f2" stroke-width="1"/><path d="M3 5.5 H8" stroke="#f2f2f2" stroke-width="1.1"/></svg>
  <span class="t" style="left:97.5px;top:9.3px;font-size:7.2px;color:#f0f0f0;-webkit-text-stroke:0.2px #f0f0f0">100%</span>
  <svg class="abs" style="left:121.5px;top:7px" width="11" height="11" viewBox="0 0 11 11"><circle cx="5.5" cy="5.5" r="4.8" fill="none" stroke="#f2f2f2" stroke-width="1"/><path d="M3 5.5 H8 M5.5 3 V8" stroke="#f2f2f2" stroke-width="1.1"/></svg>
  <span class="abs" style="left:140.5px;top:8px;width:0.8px;height:9px;background:#5a5a5a"></span>
  <svg class="abs" style="left:148px;top:7.5px" width="10.5" height="10.5" viewBox="0 0 10.5 10.5"><path d="M1 9.5 L1.4 7.2 L7.4 1.2 Q8.1 0.6 8.8 1.2 L9.3 1.7 Q9.9 2.4 9.3 3.1 L3.3 9.1 Z M6.5 2.1 L8.4 4" fill="none" stroke="#f2f2f2" stroke-width="0.95" stroke-linejoin="round"/></svg>
  <svg class="abs" style="left:169.5px;top:8px" width="10" height="10" viewBox="0 0 10 10"><rect x="0.6" y="0.6" width="8.8" height="8.8" rx="1.3" fill="none" stroke="#f2f2f2" stroke-width="1"/></svg>
  <svg class="abs" style="left:190px;top:7.5px" width="10.5" height="10.5" viewBox="0 0 10.5 10.5"><circle cx="5.25" cy="5.25" r="4.6" fill="none" stroke="#f2f2f2" stroke-width="1"/></svg>
  <span class="abs" style="left:208px;top:5px;width:16px;height:16px;border-radius:2px;background:#5d5d5e"></span>
  <svg class="abs" style="left:211px;top:8px" width="10" height="10" viewBox="0 0 10 10"><path d="M0.8 0.8 L9 3.6 L5.6 4.8 L9 8.2 L8.2 9 L4.8 5.6 L3.6 9 Z" fill="none" stroke="#f2f2f2" stroke-width="0.9" stroke-linejoin="round"/></svg>
</div>
</body></html>
